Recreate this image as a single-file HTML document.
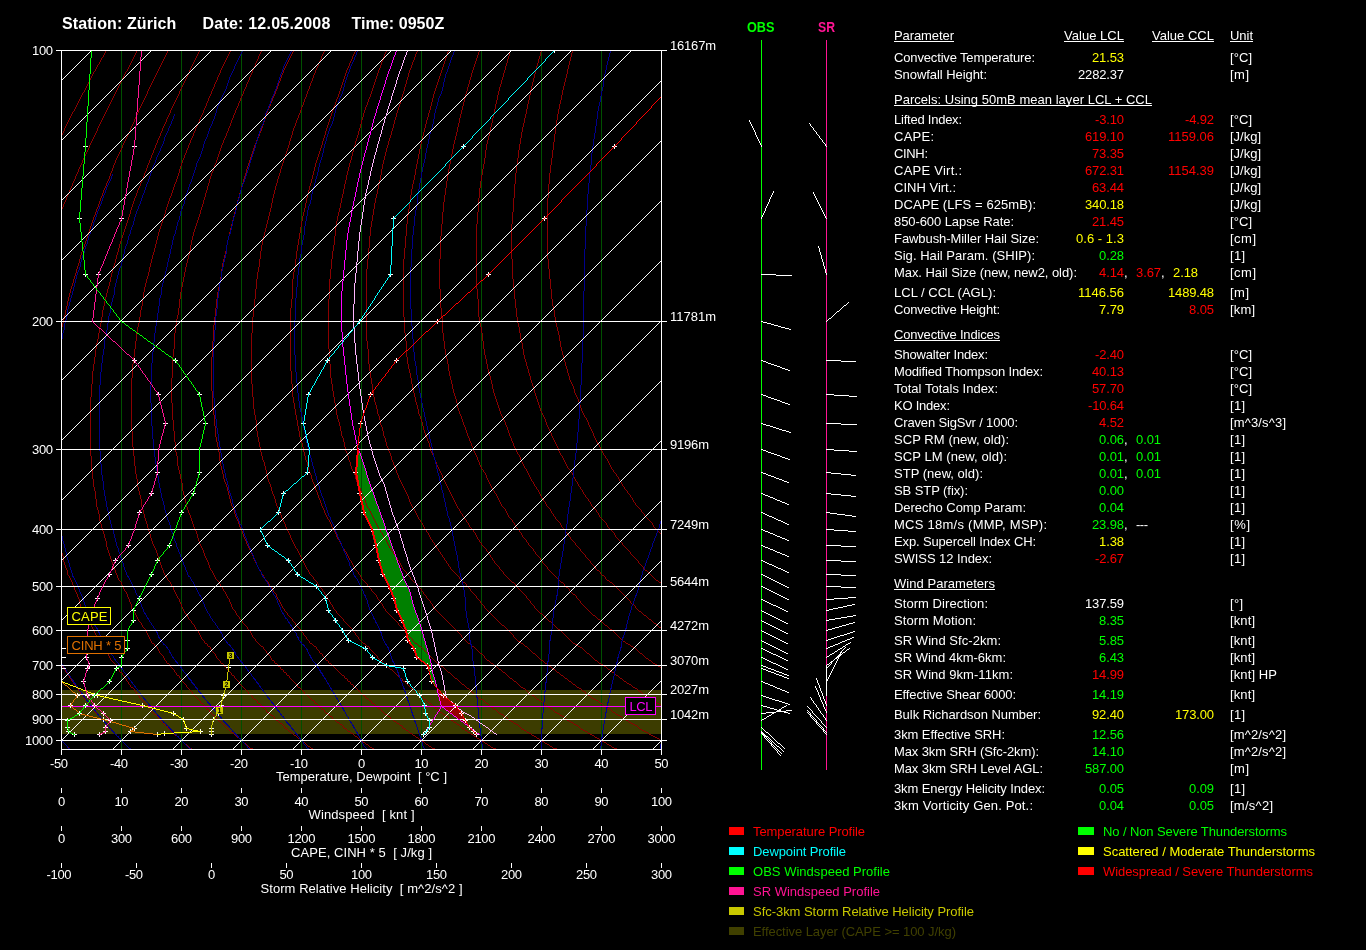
<!DOCTYPE html>
<html><head><meta charset="utf-8"><title>Sounding Zürich 12.05.2008 0950Z</title>
<style>html,body{margin:0;padding:0;background:#000;overflow:hidden}body{width:1366px;height:950px;position:relative}text{white-space:pre}</style></head>
<body>
<svg width="1366" height="950" viewBox="0 0 1366 950" style="position:absolute;left:0;top:0;will-change:transform" shape-rendering="crispEdges" fill="none" font-family="'Liberation Sans', sans-serif" font-size="13">
<rect width="1366" height="950" fill="#000"/>
<defs><clipPath id="cp"><rect x="62" y="51" width="599" height="698"/></clipPath></defs>
<rect x="62" y="690" width="599" height="44" fill="#3c3c00"/>
<polygon points="357.3,447 357,449.3 355.5,472.4 359.2,493.4 363.1,512.5 371,529.5 375,545.6 378.4,560.5 382.4,574.5 388.6,586.3 393.2,598.4 396.4,610.6 401.6,620.9 405.1,630.3 407.6,640.5 413.4,648.3 416.4,657.5 427.5,665.6 428.5,668 431.3,681.4 437,688 437,688 435.4,681.7 432.3,672 430.1,660.3 420.4,625.2 413.2,605.3 409,590 405.3,582.4 397.4,561.3 389.5,538.5 380.7,513.8 370.1,485.7 361.3,457.6 357.8,447" fill="#008000"/>
<polygon points="437,688 443.3,695.4 455,705.6 461.5,713.4 465.6,720.2 469.3,727.6 473.4,731 476.3,734.3 479.6,734.3 441.6,706.9 438.9,695.2 437,688" fill="#960000"/>
<path d="M121.5 51V749M181.5 51V749M241.5 51V749M301.5 51V749M361.5 51V749M421.5 51V749M481.5 51V749M541.5 51V749M601.5 51V749" stroke="#005000"/>
<path transform="translate(.5,0)" d="M0 0m62 133v2m0 72v2m0 114v4m0 226v3m1 -425v2m0 71v3m0 112v4m0 233v6m0 105v2m1 -541v3m0 71v2m0 111v4m0 243v3m1 -439v2m0 72v2m0 108v5m0 250v3m0 102v2m1 -548v2m0 71v3m0 106v4m0 258v2m1 -448v2m0 71v2m0 104v5m0 264v5m0 98v2m1 -555v2m0 71v2m0 102v4m1 -183v2m0 70v3m0 100v4m0 279v2m0 98v2m1 -562v2m0 70v2m0 99v4m0 285v2m1 -466v2m0 70v2m0 98v3m0 291v2m0 97v2m1 -569v2m0 69v3m0 97v3m0 296v3m1 -404v2m0 96v4m0 302v2m0 95v2m1 -575v2m0 68v2m0 95v3m0 308v3m1 -483v2m0 67v3m0 94v3m0 314v2m0 93v2m1 -582v2m0 67v2m0 93v4m0 319v2m1 -491v2m0 67v2m0 92v3m0 325v3m1 -496v2m0 66v3m0 91v3m0 331v2m0 90v2m1 -592v2m0 66v2m0 90v4m0 336v5m1 -507v2m0 66v2m0 88v4m0 345v3m0 85v2m1 -599v2m0 66v2m0 87v3m0 352v2m1 -516v2m0 65v3m0 86v3m0 357v2m1 -453v2m0 87v2m0 362v2m0 83v2m1 -608v2m0 64v2m0 86v3m0 366v2m1 -527v2m0 64v2m0 85v3m0 371v2m1 -531v2m0 64v2m0 84v3m0 376v2m1 -535v2m0 64v2m0 83v3m0 381v2m0 80v2m1 -621v2m0 64v2m0 82v3m0 386v2m1 -543v2m0 63v3m0 81v3m1 -154v2m0 63v2m0 81v3m0 168v59m0 249v2m1 -631v2m0 63v2m0 80v3m0 158v13m0 59v14m0 155v2m1 -553v2m0 63v2m0 79v3m0 148v13m0 86v9m0 148v2m1 -557v2m0 63v2m0 78v3m0 144v7m0 108v8m0 142v2m1 -496v2m0 78v2m0 140v7m0 123v4m0 140v2m0 77v2m1 -643v2m0 62v2m0 77v3m0 134v8m0 134v8m0 134v2m1 -568v2m0 62v2m0 76v3m0 131v6m0 150v8m0 128v2m1 -572v2m0 61v3m0 76v2m0 130v4m0 164v3m0 127v2m1 -513v2m0 76v3m0 126v6m0 171v4m0 125v2m1 -579v2m0 60v2m0 75v3m0 123v6m0 181v7m0 120v2m1 -583v2m0 60v2m0 74v3m0 122v4m0 194v3m0 193v2m1 -661v2m0 60v2m0 74v2m0 119v6m0 201v4m1 -410v2m0 73v3m0 114v7m0 211v3m1 -476v2m0 59v2m0 72v3m0 113v4m0 221v3m1 -481v2m0 59v2m0 72v2m0 111v5m0 228v4m0 109v2m1 -598v2m0 59v2m0 72v2m0 109v4m0 237v3m0 108v2m1 -541v2m0 71v3m0 107v4m0 244v6m0 104v2m1 -545v2m0 71v2m0 106v4m0 254v3m1 -444v2m0 71v2m0 105v3m0 261v3m0 101v2m0 70v2m1 -624v2m0 70v3m0 103v4m0 267v3m0 100v2m1 -556v2m0 69v3m0 101v5m0 274v3m0 99v2m1 -560v2m0 69v2m0 100v4m0 282v3m1 -464v2m0 68v3m0 98v4m0 289v3m1 -469v2m0 67v3m0 98v3m0 296v3m1 -474v2m0 67v2m0 98v3m0 302v2m1 -478v2m0 66v3m0 96v4m0 307v3m0 91v2m1 -576v2m0 66v2m0 95v4m0 314v2m1 -487v2m0 66v2m0 94v3m0 320v3m0 89v2m1 -583v2m0 66v2m0 92v4m0 326v2m1 -496v2m0 66v2m0 90v4m0 422v2m1 -590v2m0 66v2m0 89v3m1 -164v2m0 66v2m0 88v3m0 341v3m1 -507v2m0 65v3m0 87v3m0 347v2m0 86v2m1 -599v2m0 65v2m0 87v3m0 352v2m1 -515v2m0 65v2m0 86v3m0 357v2m0 85v2m1 -606v2m0 65v2m0 85v3m1 -92v2m0 84v3m0 366v2m0 85v2m1 -612v2m0 64v2m0 83v3m0 371v3m1 -530v2m0 64v2m0 82v3m0 377v2m0 83v2m1 -619v2m0 64v2m0 81v3m0 382v3m1 -539v2m0 63v3m0 79v4m0 388v2m0 81v2m1 -626v2m0 63v2m0 79v3m0 168v53m0 173v5m1 -550v2m0 63v2m0 78v3m0 157v14m0 53v16m1 -390v2m0 63v2m0 77v3m0 153v7m0 83v9m1 -401v2m0 62v3m0 76v3m0 148v8m0 99v10m0 145v2m0 76v2m1 -638v2m0 62v2m0 77v2m0 143v8m0 117v8m0 139v2m1 -564v2m0 62v2m0 76v3m0 137v8m0 133v5m0 136v2m0 75v2m1 -581v2m0 75v3m0 134v6m0 146v8m0 130v2m1 -509v3m0 75v2m0 133v4m0 160v4m0 128v2m1 -513v2m0 76v2m0 129v6m0 168v4m0 201v2m1 -592v2m0 75v3m0 124v7m0 178v4m1 -395v2m0 75v2m0 123v4m0 189v8m0 116v2m1 -523v2m0 75v2m0 118v7m0 201v3m0 115v2m1 -527v2m0 74v3m0 113v7m0 211v4m1 -416v2m0 73v3m0 111v5m0 222v4m1 -422v2m0 73v2m0 110v4m0 231v3m0 108v2m1 -537v2m0 72v3m0 108v4m0 238v3m0 107v2m1 -542v3m0 71v3m0 108v3m0 245v4m0 105v2m0 70v2m1 -618v2m0 72v2m0 107v4m0 252v3m0 104v2m1 -550v2m0 71v3m0 104v5m0 259v3m0 103v2m1 -554v2m0 71v2m0 103v4m0 267v4m0 101v2m1 -558v2m0 70v3m0 101v4m0 275v3m0 100v2m0 67v2m1 -631v2m0 70v2m0 100v4m0 282v3m1 -465v2m0 69v3m0 99v3m0 289v2m1 -469v2m0 69v2m0 98v4m0 294v2m0 96v2m1 -571v2m0 68v3m0 96v4m0 300v2m1 -477v2m0 68v2m0 95v4m0 306v3m1 -482v2m0 67v3m0 93v4m0 313v3m0 91v2m1 -580v2m0 67v2m0 92v4m0 320v3m0 90v2m0 66v2m1 -652v2m0 67v2m0 91v3m0 327v3m0 89v2m1 -588v2m0 66v3m0 90v3m0 333v3m1 -502v2m0 66v2m0 90v3m0 339v3m1 -507v2m0 65v3m0 89v3m0 345v2m1 -511v2m0 65v2m0 89v3m0 350v3m0 83v2m1 -601v2m0 65v2m0 88v3m0 356v2m0 83v2m1 -605v2m0 65v2m0 86v4m1 -161v2m0 64v3m0 85v3m0 366v2m0 83v2m1 -612v2m0 64v2m0 85v3m0 371v2m0 146v2m1 -613v2m0 84v3m1 -91v2m0 83v3m0 463v2m1 -556v3m0 83v2m0 384v2m1 -476v2m0 83v3m0 182v25m0 181v2m1 -480v2m0 82v3m0 164v21m0 25v17m1 -316v2m0 81v3m0 159v8m0 63v11m0 156v3m1 -488v2m0 80v3m0 146v16m0 82v11m0 148v2m0 78v2m1 -572v2m0 80v2m0 141v8m0 109v10m0 140v2m1 -496v2m0 79v3m0 137v6m0 127v4m0 138v2m0 77v2m1 -579v2m0 78v3m0 136v4m0 137v10m0 130v2m1 -504v2m0 77v3m0 132v7m0 151v4m1 -379v3m0 75v4m0 126v9m0 162v4m0 125v3m0 74v2m1 -589v2m0 75v3m0 123v7m0 175v5m0 123v2m1 -517v2m0 74v3m0 121v5m0 187v4m0 121v3m0 72v2m1 -596v2m0 73v3m0 119v5m0 196v8m0 116v2m1 -526v2m0 73v2m0 117v5m0 209v4m0 114v2m1 -530v2m0 72v3m0 114v5m0 218v4m0 112v2m1 -534v2m0 72v2m0 112v5m0 227v4m1 -426v2m0 71v3m0 110v4m0 236v4m0 178v2m1 -612v2m0 71v2m0 109v4m0 244v3m0 105v2m1 -544v2m0 70v3m0 107v4m0 251v3m0 104v2m1 -549v3m0 70v2m0 106v4m0 258v2m1 -447v2m0 70v3m0 102v6m0 264v3m1 -452v2m0 70v2m0 100v5m0 273v3m0 100v2m1 -559v2m0 70v2m0 98v4m0 281v3m0 168v2m1 -632v2m0 69v3m0 96v4m0 288v3m1 -467v2m0 69v2m0 96v3m0 295v2m0 96v2m1 -569v2m0 68v3m0 95v3m0 300v2m0 96v2m1 -573v2m0 68v2m0 95v3m0 305v3m1 -480v2m0 68v2m0 94v3m0 311v4m1 -486v2m0 68v2m0 93v3m0 318v3m0 90v2m1 -514v3m0 92v3m0 324v3m0 89v2m1 -518v2m0 91v4m0 330v2m0 89v2m0 64v2m1 -588v2m0 90v3m0 336v2m0 89v2m1 -526v2m0 89v3m0 341v2m1 -440v3m0 87v4m0 346v3m1 -445v2m0 87v3m0 353v3m0 85v2m0 62v2m1 -601v2m0 85v4m0 359v2m1 -455v3m0 84v3m0 365v2m1 -459v2m0 83v4m0 370v2m0 82v2m1 -548v3m0 82v3m0 376v3m1 -469v2m0 81v4m0 382v3m0 142v2m1 -618v2m0 80v3m0 389v2m0 77v2m1 -558v3m0 79v3m0 181v34m0 258v2m1 -562v2m0 80v2m0 168v16m0 34v18m0 162v2m1 -486v2m0 79v3m0 154v16m0 68v6m0 158v2m1 -491v3m0 78v3m0 149v8m0 90v11m0 149v2m1 -495v2m0 79v2m0 143v9m0 109v11m0 140v2m0 75v2m1 -576v2m0 78v3m0 136v9m0 129v5m0 214v2m0 59v2m1 -642v3m0 77v3m0 132v7m0 143v5m1 -372v2m0 77v3m0 130v5m0 155v5m1 -379v2m0 76v3m0 128v5m0 165v9m0 121v2m1 -514v3m0 75v3m0 126v5m0 179v5m0 118v2m0 75v2m1 -595v2m0 75v3m0 121v8m0 189v4m1 -404v2m0 75v2m0 118v6m0 201v4m0 113v2m1 -525v2m0 74v3m0 116v4m0 211v5m0 110v2m0 73v2m1 -604v2m0 74v2m0 115v4m0 220v3m1 -422v2m0 74v2m0 113v4m0 227v2m0 108v2m1 -536v2m0 73v3m0 109v6m0 233v3m0 107v2m0 71v2m1 -613v2m0 73v2m0 107v5m0 242v4m0 105v2m1 -544v2m0 72v3m0 105v4m0 251v4m1 -443v2m0 72v2m0 104v4m0 259v4m0 100v3m1 -479v3m0 102v4m0 267v4m0 99v2m1 -484v3m0 101v4m0 275v3m0 98v3m0 66v2m1 -557v2m0 100v4m0 282v2m0 99v2m1 -494v3m0 98v4m0 288v2m1 -397v2m0 97v4m0 294v4m0 162v2m1 -568v3m0 95v4m0 302v3m0 94v2m1 -505v2m0 94v4m0 309v2m0 94v2m1 -509v2m0 92v4m0 315v2m1 -418v3m0 91v3m0 321v3m1 -423v2m0 90v4m0 327v3m0 90v2m0 63v2m1 -586v3m0 89v3m0 334v2m1 -433v2m0 88v4m0 339v2m1 -437v2m0 87v3m0 345v3m0 87v2m1 -532v3m0 85v4m0 351v3m1 -448v2m0 85v3m0 358v2m1 -452v2m0 84v3m0 363v2m1 -457v3m0 82v4m0 368v3m1 -462v2m0 82v3m0 375v2m0 81v2m1 -549v2m0 81v3m0 380v2m0 144v2m1 -617v3m0 80v3m0 385v2m1 -475v2m0 80v3m0 390v2m0 79v2m1 -560v2m0 79v3m0 176v51m0 168v2m0 79v2m1 -565v3m0 78v3m0 163v16m0 51v13m0 157v2m0 79v2m0 59v2m1 -630v2m0 78v3m0 157v9m0 80v12m0 147v3m1 -493v2m0 77v3m0 151v9m0 101v6m0 144v2m1 -498v3m0 77v2m0 144v10m0 116v5m0 141v2m0 76v2m1 -580v2m0 77v3m0 136v10m0 131v11m0 132v2m1 -506v2m0 77v2m0 132v7m0 152v6m0 128v2m0 134v2m1 -647v3m0 77v2m0 129v5m0 165v5m0 125v2m1 -515v2m0 77v3m0 123v8m0 175v5m1 -395v2m0 77v2m0 118v8m0 188v5m0 118v2m1 -444v3m0 114v6m0 201v4m0 116v2m0 131v2m1 -582v3m0 112v5m0 211v4m1 -338v3m0 111v4m0 220v2m0 113v2m0 70v2m1 -530v3m0 110v4m0 226v4m0 111v2m1 -463v3m0 109v4m0 234v4m1 -357v3m0 108v4m0 242v4m0 177v2m0 57v2m1 -602v3m0 107v4m0 250v5m1 -371v2m0 106v4m0 259v3m0 100v2m1 -478v2m0 104v4m0 266v2m0 100v2m1 -483v3m0 102v4m0 272v3m0 169v2m1 -557v2m0 100v5m0 279v4m0 167v2m1 -562v3m0 97v5m0 288v3m0 94v2m1 -494v2m0 96v4m0 296v2m0 94v2m1 -498v2m0 94v4m0 302v3m0 162v2m0 54v2m1 -628v3m0 92v4m0 309v4m1 -414v2m0 92v3m0 317v3m0 88v3m1 -511v3m0 90v4m0 323v2m0 89v2m0 65v2m1 -583v3m0 90v3m0 329v2m1 -429v2m0 90v3m0 334v3m0 87v2m1 -524v3m0 88v4m0 340v2m0 87v2m0 63v2m1 -594v3m0 88v3m0 346v3m0 86v2m1 -533v2m0 88v3m0 352v2m0 86v2m1 -538v3m0 87v3m0 357v2m0 148v2m1 -604v2m0 87v3m0 362v2m0 85v2m0 115v2m1 -662v2m0 86v3m0 367v3m1 -463v2m0 85v3m0 373v2m0 144v2m1 -613v2m0 84v3m0 378v2m0 82v2m1 -555v2m0 83v3m0 383v2m1 -475v2m0 81v4m0 388v2m0 141v2m1 -622v2m0 80v3m0 167v63m0 164v3m1 -484v2m0 79v3m0 161v9m0 63v13m0 154v2m1 -488v2m0 77v4m0 144v20m0 85v13m0 143v2m0 77v2m1 -493v3m0 141v7m0 118v6m0 139v2m1 -418v2m0 139v5m0 131v6m0 135v2m1 -423v3m0 133v8m0 142v6m0 131v2m0 75v2m1 -505v3m0 128v8m0 156v5m1 -302v2m0 125v6m0 169v6m0 123v2m0 134v2m1 -572v3m0 121v6m0 181v5m0 120v2m1 -440v2m0 118v6m0 192v6m0 116v2m1 -445v3m0 114v6m0 204v4m0 114v2m0 72v2m1 -524v3m0 111v6m0 214v2m0 114v2m1 -454v2m0 109v5m0 222v4m0 112v2m1 -459v3m0 107v4m0 231v5m0 109v2m0 70v2m1 -536v3m0 106v4m0 240v4m0 107v2m0 127v2m1 -597v2m0 104v5m0 248v4m0 105v2m1 -473v3m0 101v5m0 257v2m0 105v2m0 68v2m1 -548v3m0 100v4m0 264v4m1 -377v2m0 99v4m0 272v4m0 100v2m1 -486v3m0 97v4m0 280v3m0 99v2m0 67v2m1 -560v3m0 97v3m0 287v2m1 -394v2m0 96v4m0 292v4m1 -401v3m0 94v4m0 300v3m1 -407v3m0 93v4m0 307v2m0 93v2m1 -506v2m0 92v4m0 313v3m0 214v2m1 -633v3m0 90v4m0 320v3m1 -422v2m0 90v3m0 327v2m0 155v2m1 -583v2m0 89v3m0 332v3m0 87v2m1 -521v3m0 88v3m0 338v3m0 86v2m0 119v2m1 -646v2m0 88v3m0 344v2m0 151v2m1 -594v2m0 87v3m0 349v3m1 -447v3m0 86v3m0 355v3m1 -452v2m0 85v4m0 361v2m0 81v2m0 63v2m1 -604v2m0 84v3m0 367v2m1 -375v3m0 372v3m0 79v2m0 116v2m1 -581v4m0 378v2m0 143v2m1 -532v3m0 384v2m0 78v2m1 -472v3m0 389v2m0 78v2m1 -477v3m0 174v50m0 312v2m1 -544v3m0 157v20m0 50v15m0 156v2m0 78v2m1 -486v3m0 150v10m0 85v14m0 144v2m0 78v2m1 -491v3m0 143v10m0 109v6m0 140v3m1 -417v3m0 138v8m0 125v7m0 136v2m0 76v2m0 110v2m1 -612v3m0 135v6m0 140v6m0 210v2m1 -504v2m0 129v9m0 152v6m0 127v2m1 -430v3m0 122v9m0 167v6m0 123v2m1 -435v3m0 119v6m0 182v6m0 119v3m0 74v2m1 -516v2m0 117v5m0 194v4m0 118v2m1 -445v3m0 115v4m0 203v3m1 -331v3m0 114v4m0 210v4m0 114v2m1 -454v3m0 112v5m0 218v5m0 111v2m1 -459v3m0 110v5m0 228v5m0 108v2m1 -464v3m0 109v4m0 238v2m0 108v2m1 -469v3m0 107v5m0 244v4m0 177v2m0 105v2m1 -652v3m0 105v5m0 253v5m0 102v2m0 125v2m1 -605v3m0 104v4m0 263v4m1 -381v3m0 102v5m0 271v2m0 99v2m1 -486v2m0 101v4m0 278v3m0 98v2m0 123v2m1 -615v2m0 99v4m0 285v4m0 96v2m1 -495v3m0 97v4m0 293v2m0 96v2m1 -499v2m0 97v3m0 299v4m0 216v2m1 -625v2m0 95v4m0 306v3m0 92v2m1 -507v3m0 93v4m0 313v2m0 92v2m0 64v2m1 -577v2m0 92v4m0 319v2m0 92v2m0 118v2m1 -635v2m0 91v3m0 325v2m0 92v2m1 -428v4m0 330v4m0 154v2m1 -497v3m0 338v3m1 -347v3m0 344v2m1 -353v4m0 349v2m0 86v2m0 63v2m1 -511v3m0 355v2m1 -364v4m0 360v3m0 84v2m1 -457v4m0 367v3m0 83v2m1 -462v3m0 374v2m1 -383v4m0 379v2m1 -388v3m0 385v2m1 -393v3m0 390v3m0 193v2m1 -593v2m0 162v72m0 162v3m1 -404v3m0 154v10m0 72v8m0 157v2m0 76v2m1 -487v3m0 146v11m0 90v15m1 -267v2m0 137v12m0 116v7m0 138v2m0 136v2m1 -555v3m0 130v9m0 135v7m0 133v2m1 -422v3m0 127v6m0 151v6m0 129v2m0 74v2m0 110v2m1 -615v3m0 124v6m0 163v7m0 124v2m1 -432v3m0 121v6m0 176v6m0 120v2m1 -437v3m0 118v6m0 188v5m0 117v2m1 -442v3m0 116v5m0 199v3m0 116v2m1 -447v3m0 115v4m0 207v4m0 114v2m0 70v2m1 -524v3m0 113v5m0 215v5m0 111v2m0 70v2m0 57v2m1 -588v3m0 111v5m0 225v2m0 111v2m1 -461v2m0 110v4m0 232v4m1 -355v3m0 107v5m0 240v5m0 105v2m0 69v2m1 -541v3m0 104v6m0 250v2m1 -367v2m0 102v5m0 258v4m0 102v2m0 69v2m0 55v2m1 -606v3m0 100v4m0 267v5m0 99v2m0 69v2m1 -554v3m0 99v4m0 276v2m0 99v2m1 -487v2m0 98v4m0 282v4m0 167v2m1 -463v4m0 290v4m0 94v2m1 -397v3m0 298v2m0 94v2m1 -403v4m0 303v3m0 93v2m1 -408v3m0 310v2m0 93v2m1 -413v3m0 315v3m0 261v2m1 -588v4m0 321v4m0 89v2m1 -423v3m0 329v2m1 -338v4m0 334v3m0 87v2m1 -434v4m0 341v2m1 -350v3m0 347v3m0 85v2m1 -444v4m0 353v3m1 -363v3m0 360v2m0 83v2m1 -453v3m0 365v3m0 145v2m1 -521v3m0 371v2m0 81v2m1 -463v4m0 376v2m0 81v2m1 -468v3m0 382v2m0 81v2m1 -473v3m0 387v2m0 81v2m0 110v2m0 45v2m1 -637v3m0 165v58m0 169v2m1 -401v4m0 157v11m0 58v16m0 155v2m1 -406v3m0 149v12m0 85v8m0 149v2m1 -412v4m0 140v12m0 105v16m0 135v2m0 78v2m1 -497v3m0 135v9m0 133v7m0 130v2m0 137v2m1 -562v4m0 132v6m0 149v5m0 127v3m1 -429v3m0 129v7m0 160v4m0 126v3m1 -434v2m0 125v7m0 171v5m0 124v2m0 73v2m1 -514v3m0 121v6m0 183v6m0 120v2m1 -444v3m0 119v5m0 195v5m0 117v2m0 131v2m1 -581v2m0 118v4m0 205v4m1 -336v3m0 115v5m0 213v4m0 112v2m1 -457v3m0 112v6m0 222v5m0 109v2m1 -461v2m0 110v5m0 233v3m0 108v2m1 -356v5m0 241v4m0 106v2m0 67v2m1 -432v5m0 250v5m0 103v2m1 -370v5m0 260v2m1 -272v5m0 267v3m0 101v2m1 -382v4m0 275v3m0 167v2m1 -455v4m0 282v4m0 97v2m1 -393v4m0 290v4m0 95v2m0 65v2m1 -466v4m0 298v3m0 94v2m1 -405v4m0 305v3m1 -316v4m0 312v2m0 92v2m0 64v2m1 -481v3m0 318v3m1 -328v4m0 324v2m0 90v2m1 -425v3m0 330v4m0 88v2m1 -431v4m0 337v4m0 86v2m0 62v2m1 -501v4m0 345v2m1 -355v4m0 351v2m0 85v2m0 62v2m1 -512v4m0 357v2m0 149v2m1 -517v3m0 363v3m0 83v2m1 -457v3m0 369v2m1 -377v3m0 374v3m0 81v2m1 -466v3m0 380v2m1 -388v3m0 385v2m0 80v2m1 -475v3m0 180v30m0 180v2m1 -398v3m0 160v23m0 30v19m0 163v2m0 79v2m1 -484v3m0 151v12m0 72v9m0 156v2m1 -408v3m0 142v12m0 93v16m0 142v3m0 77v2m1 -493v3m0 135v10m0 121v8m0 137v2m1 -419v3m0 131v7m0 139v8m0 131v2m0 76v2m1 -502v3m0 127v7m0 154v6m0 127v2m1 -429v3m0 123v7m0 167v4m0 125v2m0 75v2m1 -511v3m0 120v6m0 178v5m0 122v2m1 -319v6m0 189v7m0 117v2m0 74v2m0 151v2m1 -555v5m0 202v5m0 114v2m1 -333v5m0 212v4m0 112v2m0 73v2m1 -415v5m0 221v4m0 110v2m1 -347v5m0 230v5m0 107v2m1 -354v5m0 240v4m0 105v2m1 -360v4m0 249v3m0 104v2m1 -366v4m0 256v3m0 103v2m1 -372v4m0 263v4m0 101v2m1 -379v5m0 271v5m0 98v2m1 -385v4m0 281v3m1 -293v5m0 288v3m0 95v2m0 66v2m1 -465v4m0 296v2m0 95v2m1 -403v4m0 302v3m0 216v2m1 -531v4m0 309v3m0 92v2m1 -414v4m0 316v3m1 -327v4m0 323v2m0 90v2m1 -425v4m0 329v3m1 -339v3m0 336v3m0 87v2m0 62v2m1 -499v4m0 342v3m1 -352v3m0 349v2m0 85v2m1 -445v4m0 354v3m0 84v2m1 -450v3m0 361v2m0 146v2m1 -518v4m0 366v3m1 -376v3m0 373v2m1 -381v3m0 378v3m0 79v2m1 -468v3m0 384v2m1 -392v3m0 389v2m0 78v2m1 -477v3m0 163v65m0 166v2m0 78v2m0 59v2m1 -543v3m0 154v12m0 65v10m0 158v3m0 77v2m1 -487v3m0 143v14m0 87v18m0 143v2m1 -274v10m0 119v6m0 139v3m0 75v2m1 -361v7m0 135v4m0 138v2m0 134v2m1 -428v6m0 146v6m0 134v2m0 74v2m1 -376v6m0 158v8m1 -177v5m0 172v8m0 121v2m1 -314v6m0 185v6m0 251v2m0 48v2m1 -508v8m0 197v4m0 114v2m1 -331v6m0 209v5m0 111v3m0 71v2m1 -411v4m0 220v5m0 109v2m1 -344v4m0 229v4m0 107v2m0 70v2m1 -422v4m0 237v3m0 106v2m1 -357v5m0 244v4m0 104v2m0 69v2m1 -434v4m0 253v4m0 102v2m1 -370v5m0 261v5m0 99v2m0 68v2m1 -446v4m0 271v4m1 -284v5m0 279v3m0 95v2m0 68v2m1 -459v5m0 287v3m1 -299v4m0 295v3m0 92v2m1 -401v5m0 302v3m0 91v2m1 -407v4m0 310v3m0 90v2m1 -413v4m0 317v3m0 89v2m0 65v2m1 -485v3m0 324v3m0 88v2m1 -424v4m0 330v2m0 88v2m1 -429v3m0 336v2m1 -345v4m0 341v2m0 152v2m1 -504v3m0 347v2m1 -356v4m0 352v3m0 84v2m1 -448v3m0 359v2m0 84v2m1 -454v4m0 364v3m0 83v2m1 -459v3m0 371v3m0 82v2m1 -465v4m0 377v3m1 0v2m1 -214v35m0 179v3m1 -229v12m0 35v20m0 162v2m0 77v2m1 -324v14m0 67v10m0 154v3m0 189v2m1 -453v14m0 91v10m0 147v2m0 75v2m1 -352v11m0 115v9m0 140v2m0 75v2m0 57v2m1 -421v8m0 135v9m0 133v2m1 -294v7m0 152v6m0 129v2m1 -304v8m0 165v4m1 -183v6m0 177v6m0 122v2m0 73v2m1 -394v6m0 189v6m0 118v3m1 -328v6m0 201v4m0 117v2m0 71v2m1 -408v5m0 211v6m0 113v2m0 71v2m1 -414v4m0 222v6m0 109v2m1 -348v5m0 232v4m0 107v2m1 -354v4m0 241v3m1 -253v5m0 248v4m0 103v2m0 69v2m0 54v2m1 -494v5m0 257v3m0 102v2m1 -373v4m0 265v4m0 100v2m0 68v2m1 -450v5m0 273v3m0 99v2m1 -387v5m0 281v4m0 97v2m0 122v2m1 -517v4m0 290v3m0 96v2m1 -399v4m0 297v3m1 -308v4m0 304v3m0 93v2m0 65v2m1 -477v4m0 311v4m0 91v2m0 120v2m1 -538v4m0 319v3m0 156v2m1 -488v4m0 326v3m0 88v2m1 -426v3m0 333v3m1 -343v4m0 339v3m0 85v2m1 -436v3m0 346v3m0 84v2m1 -442v4m0 352v3m0 83v2m0 62v2m1 -149v2m0 83v2m1 -85v2m0 146v2m1 -148v2m0 82v2m1 -84v2m1 0v3m0 80v2m1 -82v3m0 79v2m1 -308v61m0 166v2m0 140v2m1 -385v14m0 61v10m0 158v2m1 -256v11m0 85v10m0 150v2m1 -266v8m0 106v10m0 142v2m0 76v2m1 -353v7m0 124v10m0 134v3m0 75v2m1 -363v8m0 141v7m0 130v2m1 -296v8m0 156v4m0 128v2m0 74v2m1 -382v8m0 168v7m0 123v2m1 -316v8m0 183v6m0 119v2m0 73v2m1 -399v6m0 197v4m0 117v2m1 -332v6m0 207v4m0 115v2m1 -339v5m0 217v4m0 113v3m1 -347v5m0 226v6m0 110v2m1 -353v4m0 237v6m0 106v2m0 68v2m1 -430v5m0 247v4m0 174v2m1 -437v5m0 256v4m0 101v2m1 -372v4m0 265v4m0 99v2m1 -378v4m0 273v3m0 98v2m0 122v2m1 -508v4m0 280v4m0 96v2m0 66v2m1 -458v4m0 288v3m0 95v2m1 -397v5m0 295v4m0 93v2m1 -403v4m0 304v3m0 158v2m1 -475v4m0 311v4m0 209v2m1 -534v4m0 319v2m0 88v2m0 65v2m1 -486v4m0 325v2m1 -333v2m0 331v2m0 87v2m1 -89v3m0 86v2m1 -88v4m0 84v2m1 -86v2m0 84v2m0 62v2m1 -150v2m0 199v2m1 -201v2m0 83v2m1 -85v3m0 82v2m1 -84v3m1 0v3m0 79v2m0 60v2m0 50v2m1 -195v3m1 0v2m0 77v2m1 -79v2m0 77v2m1 -79v2m1 78v2m0 58v2m0 135v2m1 -276v2m1 0v2m1 0v3m0 74v2m1 -76v2m1 0v2m0 73v2m0 57v2m1 -134v2m0 73v2m1 -75v2m1 0v3m1 0v2m1 0v2m0 127v2m1 -129v2m0 68v2m1 -70v2m1 69v2m1 -70v2m0 68v2m1 -70v2m0 123v2m1 -125v2m1 0v2m1 0v2m2 1v2m0 119v2m1 -56v2m1 -66v2m0 64v2m1 -66v2m1 0v2m1 0v2m1 0v2m2 1v2m1 61v2m1 0v2m1 -63v2m2 1v2m1 0v2m2 1v2m1 0v2m0 57v2m2 -58v2m3 2v2m3 2v2m0 55v2m0 47v2m2 -105v2m1 0v2m2 1v2m0 101v2m3 -47v2m3 -53v2m2 55v2m1 -55v2m8 7v2m1 0v2" stroke="#8c0000"/><path transform="translate(0,.5)" d="M0 0m199 51h1m30 0h1m30 0h1m31 0h1m30 0h1m30 0h1m30 0h1m30 0h1m30 0h1m30 0h1m30 0h1m30 0h1m-440 6h1m-5 7h1m-5 7h1m31 0h1m-44 21h1m-11 19h1m511 306h1m12 27h1m-81 10h1m42 1h1m42 0h1m1 3h1m-82 10h1m42 0h1m-87 1h1m86 0h1m42 0h1m-129 3h1m86 0h1m42 0h1m0 1h1m1 3h1m-86 5h1m43 0h1m43 0h1m-86 5h1m43 0h1m43 0h1m-87 3h1m43 0h1m43 0h1m-133 1h1m132 0h1m-132 3h1m132 0h1m-45 1h1m44 0h1m-44 3h1m44 0h1m-90 1h1m44 0h1m-44 3h1m44 0h1m44 1h1m1 3h1m-135 1h1m44 0h1m44 0h1m44 0h1m-135 1h1m44 0h1m44 0h1m44 0h1m-271 1h1m44 0h1m44 0h1m45 0h1m44 0h1m44 0h1m44 0h1m-45 1h1m44 0h1m-44 3h1m44 0h1m-182 1h1m90 0h1m90 0h1m-181 3h1m90 0h1m90 0h1m-137 1h1m90 0h1m45 0h1m-137 1h1m90 0h1m45 0h1m-320 1h1m90 0h1m45 0h1m45 0h1m44 0h1m45 0h1m45 0h1m-92 1h1m45 0h1m45 0h1m-92 1h1m45 0h1m45 0h1m-230 1h1m45 0h1m45 0h1m45 0h1m45 0h1m45 0h1m-182 5h1m45 0h1m45 0h1m45 0h1m45 0h1m-184 1h1m45 0h1m45 0h1m45 0h1m45 0h1m-323 1h1m45 0h1m45 0h1m46 0h1m45 0h1m45 0h1m45 0h1m45 0h1m-46 1h1m45 0h1m-46 1h1m45 0h1m-278 1h1m45 0h1m46 0h1m45 0h1m45 0h1m46 0h1m45 0h1m-93 1h1m92 0h1m-92 3h1m-47 1h1m92 0h1m-93 1h1m92 0h1m-280 1h1m46 0h1m45 0h1m46 0h1m46 0h1m45 0h1m46 0h1m-47 1h1m46 0h1m-47 1h1m46 0h1m-188 1h1m46 0h1m46 0h1m46 0h1m46 0h1m-187 3h1m46 0h1m46 0h1m46 0h1m46 0h1m-141 1h1m46 0h1m46 0h1m46 0h1m-141 1h1m46 0h1m46 0h1m46 0h1m-330 1h1m46 0h1m46 0h1m46 0h1m47 0h1m46 0h1m46 0h1m46 0h1m0 1h1m0 1h1m-284 1h1m46 0h1m46 0h1m47 0h1m46 0h1m46 0h1m47 0h1m-48 1h1m0 1h1m-190 1h1m46 0h1m47 0h1m46 0h1m47 0h1m46 0h1m-95 1h1m94 0h1m-95 1h1m94 0h1m-238 1h1m46 0h1m47 0h1m47 0h1m46 0h1m47 0h1m-48 1h1m47 0h1m-48 1h1m47 0h1m-287 1h1m47 0h1m46 0h1m47 0h1m47 0h1m47 0h1m47 0h1m-191 3h1m47 0h1m47 0h1m47 0h1m47 0h1m-144 1h1m47 0h1m47 0h1m47 0h1m-144 1h1m47 0h1m47 0h1m47 0h1m-193 1h1m48 0h1m47 0h1m47 0h1m47 0h1m-384 3h1m47 0h1m47 0h1m47 0h1m47 0h1m48 0h1m47 0h1m47 0h1m47 0h1m-434 1h1m144 0h1m47 0h1m47 0h1m48 0h1m47 0h1m47 0h2m46 0h2m-290 1h1m47 0h1m47 0h1m48 0h1m47 0h1m48 0h1m47 0h1m-194 1h1m96 0h1m96 0h1m-194 1h1m96 0h1m96 0h1m-388 1h1m47 0h1m48 0h1m47 0h1m48 0h1m47 0h1m48 0h1m47 0h1m48 0h1m-583 1h1m96 0h1m145 0h1m96 0h1m48 0h1m47 0h1m48 0h1m47 0h2m47 0h1m-340 1h1m96 0h1m48 0h1m47 0h1m48 0h1m48 0h1m47 0h1m-146 1h1m48 0h1m96 0h1m-146 1h1m48 0h1m96 0h1m-439 1h1m48 0h1m48 0h1m47 0h1m48 0h1m48 0h1m48 0h1m48 0h1m47 0h1m48 0h1m-537 1h1m48 0h1m48 0h1m48 0h1m48 0h1m47 0h1m48 0h1m48 0h1m48 0h1m48 0h1m47 0h2m47 0h2m-538 1h1m48 0h1m48 0h1m48 0h1m48 0h1m47 0h1m48 0h1m48 0h1m48 0h1m48 0h1m48 0h1m48 0h1m-294 1h1m48 0h2m47 0h2m47 0h2m47 0h2m47 0h2m47 0h2m-295 1h1m49 0h1m48 0h1m48 0h1m48 0h1m48 0h1m0 1h1m0 1h1m-443 1h1m48 0h1m48 0h1m48 0h1m48 0h1m49 0h1m48 0h1m48 0h1m48 0h1m49 0h1m-345 1h1m48 0h1m48 0h1m49 0h1m48 0h1m48 0h1m48 0h2m48 0h1m-296 1h1m48 0h1m49 0h1m48 0h1m48 0h1m49 0h1m48 0h1m-99 1h1m98 0h1m-99 1h1m98 0h1m-495 1h1m98 0h1m98 0h1m48 0h1m49 0h1m48 0h1m49 0h1m48 0h1m49 0h1m-347 1h1m98 0h1m98 0h1m49 0h1m48 0h1m49 0h1m-347 1h1m98 0h1m98 0h1m49 0h1m48 0h1m49 0h1m-298 1h1m49 0h1m48 0h1m49 0h1m49 0h1m48 0h2m48 0h1m-199 1h1m49 0h1m49 0h1m49 0h1m48 0h1m0 1h1m0 1h1m-449 1h1m49 0h1m198 0h1m49 0h1m49 0h1m49 0h1m49 0h1m-350 1h1m49 0h1m49 0h1m49 0h1m49 0h1m49 0h1m49 0h1m49 0h1m-250 1h1m49 0h1m49 0h1m49 0h1m49 0h1m49 0h1m-249 3h1m49 0h1m49 0h1m49 0h1m49 0h1m49 0h1m-301 1h1m150 0h1m49 0h1m49 0h1m49 0h2m-151 1h1m49 0h1m49 0h1m50 0h1m-51 1h1m0 1h1m-303 1h1m100 0h1m49 0h1m50 0h1m49 0h1m50 0h1m49 0h1m-505 1h1m100 0h1m100 0h1m100 0h1m50 0h1m49 0h1m50 0h1m49 0h1m-505 1h1m100 0h1m100 0h1m100 0h1m50 0h1m49 0h1m50 0h1m49 0h1m-354 1h1m100 0h1m50 0h1m50 0h1m49 0h1m50 0h1m49 0h2m-355 1h1m100 0h1m50 0h1m50 0h1m49 0h1m50 0h1m50 0h1m-457 1h1m151 0h1m50 0h1m50 0h1m50 0h1m49 0h2m49 0h1m50 0h1m-457 1h1m151 0h1m50 0h1m50 0h1m50 0h1m50 0h1m49 0h1m50 0h1m-407 1h1m50 0h1m50 0h1m50 0h1m50 0h1m50 0h1m50 0h1m49 0h2m49 0h2m-408 1h1m50 0h1m50 0h1m50 0h1m50 0h1m50 0h1m50 0h1m50 0h1m50 0h1m-357 1h1m50 0h1m50 0h1m50 0h1m50 0h1m50 0h1m50 0h1m50 0h1m-357 1h1m50 0h1m50 0h1m50 0h1m50 0h1m50 0h1m50 0h1m50 0h1m-460 1h1m50 0h1m153 0h1m50 0h1m50 0h1m50 0h1m50 0h2m49 0h2m-461 1h1m50 0h1m153 0h1m50 0h1m50 0h1m50 0h1m51 0h1m50 0h1m-513 1h1m153 0h1m50 0h1m51 0h1m50 0h1m50 0h1m50 0h2m50 0h1m50 0h1m-513 1h1m153 0h1m50 0h1m51 0h1m50 0h1m50 0h1m51 0h1m50 0h1m50 0h1m-565 1h1m102 0h1m50 0h1m102 0h1m102 0h1m50 0h1m51 0h1m50 0h1m50 0h2m-566 1h1m102 0h1m50 0h1m102 0h1m102 0h1m50 0h1m51 0h1m50 0h1m51 0h1m-412 1h1m50 0h1m51 0h1m50 0h1m51 0h1m50 0h2m50 0h1m50 0h2m50 0h1m-412 1h1m50 0h1m51 0h1m50 0h1m51 0h1m51 0h1m50 0h1m51 0h1m50 0h1m-516 1h1m154 0h1m51 0h1m50 0h1m51 0h1m51 0h1m50 0h1m51 0h1m50 0h2m-517 1h1m154 0h1m51 0h1m50 0h1m51 0h1m51 0h1m50 0h1m51 0h1m-414 1h1m51 0h1m154 0h1m51 0h1m51 0h1m50 0h2m50 0h2m-415 1h1m51 0h1m154 0h1m51 0h1m51 0h1m51 0h1m51 0h1m-312 1h1m51 0h1m51 0h1m51 0h1m51 0h1m51 0h1m51 0h1m-312 1h1m51 0h1m51 0h1m51 0h1m51 0h1m51 0h1m51 0h1m-156 1h1m51 0h1m51 0h1m51 0h1m-156 1h1m51 0h1m51 0h1m51 0h1m-313 1h1m51 0h1m51 0h1m156 0h1m51 0h1m-313 1h1m51 0h1m51 0h1m156 0h1m51 0h1m-366 1h1m156 0h1m51 0h1m51 0h1m52 0h1m51 0h1m-366 1h1m156 0h1m51 0h1m51 0h1m52 0h1m51 0h1m-419 1h1m104 0h1m51 0h1m104 0h1m51 0h1m52 0h1m51 0h1m-419 1h1m104 0h1m51 0h1m104 0h1m51 0h1m52 0h1m51 0h1m-367 1h1m104 0h1m51 0h1m52 0h1m51 0h2m51 0h1m51 0h2m-368 1h1m104 0h1m51 0h1m52 0h1m52 0h1m51 0h1m52 0h1m-526 1h1m51 0h2m51 0h2m51 0h1m51 0h2m51 0h2m50 0h2m51 0h2m51 0h2m50 0h2m51 0h2m-527 1h1m157 0h1m52 0h1m52 0h1m51 0h1m52 0h1m52 0h1m51 0h2m51 0h2m-528 1h1m157 0h1m52 0h1m52 0h1m51 0h1m52 0h1m52 0h1m52 0h1m52 0h1m-528 1h1m51 0h2m51 0h2m51 0h2m51 0h2m51 0h2m50 0h2m51 0h2m51 0h2m51 0h2m51 0h2m-212 1h1m52 0h1m52 0h1m52 0h2m51 0h2m-213 1h1m52 0h1m52 0h1m53 0h1m52 0h1m-372 1h1m52 0h1m52 0h1m52 0h1m52 0h1m52 0h1m53 0h1m52 0h1m-372 1h1m52 0h1m52 0h1m52 0h1m52 0h1m52 0h1m53 0h1m52 0h1m-426 1h1m159 0h1m52 0h1m52 0h1m52 0h1m53 0h1m52 0h1m-426 1h1m159 0h1m52 0h1m52 0h1m52 0h1m53 0h1m52 0h1m-533 1h1m52 0h1m53 0h1m52 0h1m52 0h2m52 0h1m52 0h1m52 0h2m51 0h2m52 0h2m51 0h2m-481 1h1m106 0h1m106 0h1m52 0h1m53 0h1m52 0h1m53 0h1m52 0h1m-481 1h1m106 0h1m106 0h1m52 0h1m53 0h1m52 0h1m53 0h1m52 0h1m-321 1h1m106 0h1m106 0h1m53 0h1m52 0h1m-321 1h1m106 0h1m106 0h1m53 0h1m52 0h1m-429 1h1m160 0h1m53 0h1m52 0h1m53 0h1m53 0h1m52 0h2m-430 1h1m160 0h1m53 0h1m52 0h1m53 0h1m53 0h1m53 0h1m-538 1h1m53 0h1m53 0h1m52 0h2m52 0h2m52 0h2m52 0h1m52 0h2m52 0h2m52 0h2m52 0h2m-539 1h1m322 0h1m53 0h1m53 0h1m53 0h1m53 0h1m-539 1h1m322 0h1m53 0h1m53 0h1m53 0h1m53 0h1m-539 1h1m52 0h2m52 0h2m52 0h2m52 0h2m52 0h2m52 0h2m52 0h2m52 0h2m52 0h2m52 0h2m-324 1h1m53 0h1m53 0h1m53 0h1m53 0h1m53 0h2m52 0h2m-325 1h1m53 0h1m53 0h1m53 0h1m53 0h1m54 0h1m53 0h1m-596 1h1m53 0h1m53 0h1m53 0h2m52 0h2m53 0h1m53 0h1m53 0h2m52 0h2m52 0h2m53 0h2m52 0h2m-489 1h1m162 0h1m53 0h1m54 0h1m53 0h1m53 0h1m54 0h1m53 0h1m-489 1h1m162 0h1m53 0h1m54 0h1m53 0h1m53 0h1m54 0h1m-544 1h1m53 0h1m54 0h1m53 0h1m53 0h2m53 0h1m53 0h2m53 0h1m53 0h2m52 0h2m53 0h2m-382 1h1m108 0h1m54 0h1m53 0h1m54 0h1m53 0h1m54 0h1m-382 1h1m108 0h1m54 0h1m53 0h1m54 0h1m53 0h1m54 0h1m-546 1h1m53 0h2m53 0h1m54 0h1m53 0h2m53 0h1m54 0h1m53 0h2m53 0h2m52 0h2m53 0h2m-274 1h1m54 0h1m54 0h1m54 0h1m53 0h1m54 0h1m-274 1h1m54 0h1m54 0h1m54 0h1m53 0h1m54 0h1m-548 1h1m54 0h1m53 0h2m53 0h2m53 0h2m53 0h2m53 0h1m54 0h1m54 0h1m53 0h2m53 0h2m-220 1h1m54 0h1m54 0h1m54 0h1m54 0h1m-220 1h1m54 0h1m54 0h1m54 0h1m54 0h1m-550 1h1m54 0h1m54 0h1m54 0h1m54 0h1m54 0h2m53 0h2m53 0h2m53 0h2m53 0h2m53 0h2m-386 1h1m54 0h1m165 0h1m54 0h1m54 0h1m54 0h1m-386 1h1m54 0h1m165 0h1m54 0h1m54 0h1m54 0h1m-552 1h1m54 0h1m54 0h1m55 0h1m54 0h1m54 0h2m53 0h2m54 0h1m54 0h2m53 0h2m53 0h2m-443 1h1m110 0h1m110 0h1m54 0h1m55 0h1m54 0h1m54 0h1m-443 1h1m110 0h1m110 0h1m54 0h1m55 0h1m54 0h1m54 0h2m-555 1h1m54 0h1m55 0h1m54 0h1m55 0h1m54 0h2m54 0h1m54 0h2m54 0h1m54 0h2m54 0h2m-390 1h1m166 0h1m55 0h1m54 0h1m55 0h1m55 0h1m-390 1h1m166 0h1m55 0h1m54 0h1m55 0h1m55 0h1m-557 1h1m54 0h2m54 0h1m55 0h1m54 0h2m54 0h2m54 0h1m55 0h1m54 0h2m54 0h2m54 0h2m-558 1h1m55 0h1m54 0h1m55 0h1m55 0h1m55 0h1m54 0h2m54 0h2m54 0h2m54 0h2m54 0h2m-448 1h1m55 0h1m55 0h1m55 0h1m55 0h1m55 0h1m55 0h1m55 0h1m55 0h1m-448 1h1m55 0h1m55 0h1m55 0h1m55 0h1m55 0h1m55 0h1m55 0h1m55 0h1m-560 1h1m55 0h1m55 0h1m55 0h1m55 0h1m55 0h1m55 0h1m55 0h1m55 0h1m55 0h2m54 0h2m-281 1h1m55 0h1m55 0h1m55 0h1m112 0h1m-281 1h1m55 0h1m55 0h1m55 0h1m112 0h1m-562 1h1m55 0h1m55 0h1m55 0h2m54 0h2m55 0h1m55 0h1m55 0h2m54 0h2m54 0h2m55 0h2m-563 1h1m55 0h1m55 0h1m56 0h1m55 0h1m55 0h2m54 0h2m55 0h1m55 0h2m54 0h2m55 0h2m-452 1h1m112 0h1m112 0h1m55 0h1m56 0h1m55 0h1m56 0h1m-452 1h1m112 0h1m112 0h1m55 0h1m56 0h1m55 0h1m56 0h1m-565 1h1m55 0h1m56 0h1m55 0h1m56 0h1m55 0h2m55 0h1m55 0h2m55 0h1m55 0h2m55 0h2m-566 1h1m55 0h1m56 0h1m55 0h2m55 0h1m56 0h1m55 0h2m55 0h2m54 0h2m55 0h2m55 0h2m-567 1h1m55 0h1m56 0h1m56 0h1m55 0h2m55 0h2m55 0h1m56 0h1m55 0h2m55 0h2m55 0h2m-512 1h1m283 0h1m56 0h1m56 0h1m56 0h1m56 0h1m-512 1h1m283 0h1m56 0h1m56 0h1m56 0h1m56 0h1m-569 1h1m56 0h1m55 0h2m55 0h2m55 0h2m55 0h2m55 0h2m55 0h2m55 0h2m55 0h2m55 0h2m-570 1h1m56 0h1m56 0h1m56 0h1m56 0h1m56 0h1m56 0h1m56 0h1m56 0h1m56 0h1m56 0h2m-286 1h1m56 0h1m56 0h1m56 0h1m56 0h1m-228 1h1m56 0h1m56 0h1m56 0h1m56 0h1m-514 1h1m56 0h1m56 0h1m56 0h2m55 0h2m56 0h1m56 0h1m56 0h2m55 0h2m55 0h2m-515 1h1m56 0h1m56 0h1m57 0h1m56 0h1m56 0h2m55 0h2m56 0h1m56 0h2m55 0h2m-516 1h1m56 0h1m56 0h2m56 0h1m56 0h2m56 0h1m56 0h1m56 0h2m56 0h1m56 0h2m-230 1h1m56 0h1m57 0h1m56 0h1m57 0h1m-230 1h1m56 0h1m57 0h1m56 0h1m57 0h1m-518 1h1m56 0h1m57 0h1m56 0h2m56 0h1m57 0h1m56 0h2m56 0h1m56 0h2m56 0h2m-519 1h1m56 0h1m57 0h1m57 0h1m56 0h2m56 0h1m57 0h1m56 0h2m56 0h2m56 0h1m-519 1h1m56 0h2m56 0h1m57 0h1m57 0h1m56 0h2m56 0h2m56 0h2m56 0h1m56 0h2m-520 1h1m57 0h1m56 0h2m56 0h2m56 0h1m57 0h1m57 0h1m57 0h1m56 0h2m56 0h2m-521 1h1m57 0h1m57 0h1m57 0h1m56 0h2m56 0h2m56 0h2m56 0h2m56 0h2m56 0h2m-116 1h1m57 0h1m57 0h1m-116 1h1m57 0h1m57 0h1m-523 1h1m57 0h1m57 0h1m57 0h1m57 0h2m56 0h2m56 0h2m57 0h1m57 0h1m57 0h2m-524 1h1m57 0h1m57 0h1m57 0h2m57 0h1m57 0h1m57 0h2m56 0h2m56 0h2m57 0h2m-525 1h1m57 0h1m57 0h2m57 0h1m57 0h1m57 0h2m57 0h1m57 0h2m56 0h2m57 0h1m-525 1h1m57 0h1m58 0h1m57 0h1m57 0h2m57 0h1m57 0h2m57 0h1m57 0h2m56 0h2m-526 1h1m57 0h1m58 0h1m57 0h2m57 0h1m57 0h2m57 0h1m57 0h2m57 0h1m57 0h2m-527 1h1m57 0h1m58 0h1m58 0h1m57 0h2m57 0h1m57 0h2m57 0h2m56 0h2m57 0h2m-528 1h1m57 0h2m57 0h1m58 0h1m58 0h1m57 0h2m57 0h1m58 0h1m57 0h2m57 0h2m-412 1h1m234 0h1m58 0h1m58 0h1m58 0h1m-412 1h1m234 0h1m58 0h1m58 0h1m58 0h1m-530 1h1m58 0h1m58 0h1m57 0h2m57 0h2m57 0h2m57 0h2m57 0h1m58 0h1m58 0h1m-530 1h1m58 0h1m58 0h1m58 0h1m58 0h1m58 0h1m58 0h1m57 0h2m57 0h2m57 0h2m-531 1h1m58 0h1m58 0h1m58 0h1m58 0h1m58 0h2m57 0h2m57 0h2m57 0h2m57 0h2m-532 1h1m58 0h1m58 0h1m58 0h2m57 0h2m58 0h1m58 0h1m58 0h1m58 0h2m57 0h2m-533 1h1m58 0h1m58 0h2m58 0h1m58 0h1m58 0h1m58 0h2m57 0h2m58 0h1m58 0h2m-534 1h1m58 0h1m59 0h1m58 0h1m58 0h2m57 0h2m58 0h1m58 0h2m57 0h2m58 0h1m-534 1h1m58 0h1m59 0h1m58 0h1m59 0h1m58 0h1m58 0h2m58 0h1m58 0h2m57 0h2m-535 1h1m58 0h2m58 0h1m58 0h2m58 0h1m58 0h2m58 0h1m58 0h2m58 0h2m57 0h2m-536 1h1m59 0h1m58 0h1m59 0h1m58 0h2m58 0h1m58 0h2m58 0h2m58 0h1m58 0h2m-537 1h1m59 0h1m58 0h2m58 0h1m59 0h1m58 0h2m58 0h1m59 0h1m58 0h2m58 0h2m-538 1h1m59 0h1m59 0h1m58 0h2m58 0h1m59 0h1m58 0h2m58 0h2m58 0h2m58 0h2m-539 1h1m59 0h1m59 0h1m59 0h1m58 0h2m58 0h2m58 0h2m58 0h1m59 0h1m59 0h1m-539 1h1m59 0h1m59 0h1m59 0h1m59 0h1m59 0h1m59 0h1m58 0h2m58 0h2m58 0h1m-599 1h1m59 0h1m59 0h1m59 0h1m59 0h1m59 0h1m59 0h2m58 0h2m58 0h2m58 0h2m-541 1h1m59 0h1m59 0h1m59 0h1m59 0h2m58 0h2m59 0h1m59 0h1m59 0h1m59 0h2m-542 1h1m59 0h1m59 0h1m59 0h2m59 0h1m59 0h1m59 0h1m59 0h2m58 0h2m59 0h1m-542 1h1m59 0h1m59 0h2m59 0h1m59 0h1m59 0h2m58 0h2m59 0h1m59 0h2m58 0h2m-543 1h1m59 0h1m60 0h1m59 0h1m59 0h1m60 0h1m59 0h1m59 0h2m59 0h1m59 0h2m-544 1h1m59 0h1m60 0h1m59 0h1m59 0h2m59 0h1m59 0h2m59 0h1m59 0h2m59 0h1m-544 1h1m59 0h1m60 0h1m59 0h1m60 0h1m59 0h2m59 0h1m59 0h2m59 0h1m59 0h2m-545 1h1m59 0h2m59 0h2m58 0h3m58 0h2m59 0h2m58 0h3m58 0h3m57 0h4m57 0h3" stroke="#8c0000"/>
<path transform="translate(.5,0)" d="M0 0m62 333v6m0 197v5m0 123v2m0 75v1m1 -412v3m0 208v3m0 121v2m0 75v1m1 -420v7m0 214v4m0 119v2m0 74v1m1 -424v3m0 225v4m0 116v2m0 74v1m1 -429v4m0 232v5m0 113v2m0 73v1m1 -437v7m0 241v3m0 112v1m0 73v2m1 -442v3m0 251v3m0 110v2m0 73v1m1 -447v4m0 257v4m0 108v1m0 72v1m1 -451v4m0 265v3m0 106v2m1 -383v3m0 272v3m0 105v1m1 -388v4m0 278v4m0 102v2m1 -394v4m0 285v2m0 102v3m1 -400v4m0 291v2m0 102v2m1 -405v4m0 297v2m0 101v2m1 -410v4m0 303v2m0 101v2m1 -415v3m0 309v3m0 99v2m1 -418v2m0 315v2m0 99v1m1 -422v3m0 319v3m0 97v2m1 -429v5m0 325v2m0 97v1m1 -434v4m0 332v2m0 96v2m1 -439v3m0 338v3m0 94v2m1 -442v2m0 344v3m0 93v2m1 -448v4m0 349v3m0 91v2m1 -452v3m0 356v3m0 90v1m1 -455v2m0 362v3m0 88v2m1 -461v4m0 367v2m0 87v2m1 -466v4m0 373v2m0 86v2m1 -469v2m0 379v2m0 86v1m1 -473v3m0 383v2m0 85v2m1 -477v2m0 387v3m0 84v2m1 -481v3m0 392v2m0 84v1m1 -486v4m0 396v2m0 84v2m1 -490v2m0 402v2m0 83v2m1 -494v3m0 405v2m0 83v2m1 -498v3m0 410v2m0 83v1m1 -502v3m0 414v3m0 82v2m1 -506v2m0 420v2m0 81v2m1 -510v3m0 176v66m0 181v3m0 81v1m1 -513v2m0 166v13m0 66v13m0 171v3m0 78v2m1 -517v3m0 159v9m0 92v11m0 162v3m0 78v1m1 -521v3m0 154v8m0 112v6m0 159v1m0 78v2m1 -526v3m0 151v6m0 126v9m0 151v2m0 77v2m1 -529v2m0 144v10m0 141v6m0 146v2m0 77v2m1 -533v3m0 143v3m0 157v5m0 143v1m0 77v2m1 -537v3m0 140v6m0 165v6m0 138v1m0 77v2m1 -540v2m0 136v7m0 177v4m0 135v2m0 77v1m1 -543v2m0 131v7m0 188v5m0 131v2m0 77v1m1 -546v2m0 130v3m0 200v4m0 129v1m0 77v2m1 -550v2m0 125v7m0 207v4m0 126v3m0 75v1m1 -553v3m0 123v4m0 218v4m0 124v3m0 74v2m1 -557v2m0 122v4m0 226v2m0 125v1m0 74v2m1 -437v3m0 232v4m0 122v2m0 73v2m1 -446v8m0 239v4m0 120v2m0 72v2m1 -451v4m0 251v4m0 117v2m0 73v1m1 -456v4m0 259v4m0 115v1m0 72v2m1 -461v4m0 267v2m0 114v1m0 73v1m1 -466v4m0 273v4m0 111v2m0 71v2m1 -470v3m0 281v2m0 110v2m0 72v1m1 -473v2m0 286v4m0 108v2m0 70v2m1 -478v4m0 292v3m0 106v2m0 71v1m1 -483v4m0 299v2m0 105v2m0 71v1m1 -488v4m0 305v4m0 103v2m0 70v1m1 -494v5m0 313v3m0 102v1m0 70v1m1 -498v3m0 321v2m0 101v1m0 70v1m1 -501v2m0 326v3m0 99v2m0 69v1m1 -506v4m0 331v2m0 99v1m0 69v1m1 -511v4m0 336v2m0 99v2m0 68v1m1 -514v2m0 342v2m0 98v2m0 68v1m1 -519v4m0 346v2m0 98v1m0 67v1m1 -522v3m0 352v2m0 97v2m1 -458v2m0 357v2m0 96v2m1 -463v4m0 361v2m0 96v1m1 -468v4m0 367v2m0 95v2m1 -473v3m0 373v3m0 93v2m1 -477v3m0 379v2m0 93v1m1 -480v2m0 384v1m0 93v2m1 -485v3m0 387v3m0 92v1m1 -488v2m0 393v2m0 91v1m1 -492v3m0 397v3m0 89v2m1 -497v3m0 403v3m0 87v2m1 -501v3m0 409v2m0 87v1m1 -504v2m0 414v3m0 85v2m1 -509v3m0 419v2m0 84v2m1 -513v3m0 423v2m0 84v2m1 -517v3m0 428v2m0 84v1m1 -520v2m0 433v2m0 83v1m1 -524v3m0 436v2m0 83v2m1 -529v3m0 441v2m0 82v2m1 -533v3m0 209v18m0 219v1m0 82v2m1 -537v3m0 190v22m0 18v23m0 197v2m0 82v1m1 -541v3m0 182v11m0 63v13m0 186v1m0 82v2m1 -545v2m0 175v10m0 87v10m0 177v2m0 81v2m1 -548v2m0 168v9m0 107v8m0 171v1m0 81v2m1 -552v3m0 163v7m0 124v7m0 165v2m0 80v2m1 -556v3m0 160v6m0 138v7m0 160v2m0 80v1m1 -559v2m0 156v7m0 151v5m0 156v3m0 79v2m1 -563v2m0 151v7m0 163v7m0 152v3m0 77v2m1 -566v2m0 145v8m0 177v5m0 149v2m0 77v2m1 -570v3m0 144v3m0 190v5m0 146v2m0 76v2m1 -573v2m0 139v8m0 198v5m0 142v2m0 76v2m1 -576v2m0 137v4m0 211v3m0 141v1m0 77v1m1 -580v3m0 135v4m0 218v4m0 138v2m0 76v2m1 -586v4m0 134v4m0 226v5m0 134v1m0 77v1m1 -588v2m0 134v4m0 235v3m0 132v1m0 77v1m1 -591v2m0 132v4m0 242v4m0 129v2m0 76v2m1 -595v2m0 129v5m0 250v3m0 127v2m0 76v1m1 -598v3m0 127v4m0 258v2m0 127v1m0 76v2m1 -602v2m0 126v4m0 264v3m0 125v3m0 74v2m1 -605v2m0 123v5m0 271v4m0 123v2m0 74v2m1 -609v3m0 121v4m0 280v3m0 122v2m0 73v2m1 -612v2m0 119v5m0 287v2m0 122v2m0 72v2m1 -616v3m0 117v4m0 294v4m0 119v2m0 72v2m1 -619v2m0 118v2m0 302v3m0 118v1m0 72v2m1 -504v4m0 307v2m0 117v2m0 72v1m1 -509v4m0 313v4m0 114v2m0 71v2m1 -514v4m0 321v2m0 113v2m0 72v1m1 -517v2m0 327v3m0 112v1m0 71v2m1 -522v4m0 332v2m0 111v1m0 72v1m1 -528v5m0 338v3m0 109v2m0 70v2m1 -531v2m0 346v3m0 107v2m0 71v1m1 -535v3m0 351v2m0 107v2m0 70v1m1 -538v2m0 356v3m0 105v2m0 70v1m1 -543v4m0 361v2m0 105v1m0 70v1m1 -549v5m0 367v3m0 103v1m0 70v1m1 -552v2m0 375v2m0 102v2m0 69v1m1 -556v3m0 379v3m0 100v2m0 69v1m1 -560v3m0 385v2m0 100v2m0 68v1m1 -564v3m0 389v1m0 101v2m0 68v1m1 -567v2m0 393v2m0 100v2m0 67v1m1 -570v3m0 397v2m0 99v3m1 -507v3m0 402v1m0 100v2m1 -511v3m0 406v2m0 99v2m1 -515v3m0 411v2m0 98v2m1 -519v3m0 416v2m0 98v2m1 -525v4m0 421v2m0 97v2m1 -528v2m0 427v2m0 96v2m1 -531v2m0 431v2m0 96v2m1 -535v2m0 435v2m0 95v2m1 -539v3m0 438v2m0 95v2m1 -543v3m0 443v2m0 94v2m1 -547v3m0 448v3m0 93v2m1 -553v4m0 454v2m0 92v2m1 -557v3m0 460v3m0 90v2m1 -560v2m0 466v2m0 90v1m1 -563v2m0 470v2m0 89v1m1 -567v3m0 474v2m0 88v2m1 -572v3m0 479v1m0 88v2m1 -576v3m0 483v2m0 87v2m1 -579v2m0 488v2m0 86v2m1 -582v2m0 492v1m0 87v1m1 -586v3m0 495v2m0 86v2m1 -590v2m0 221v56m0 223v1m0 86v2m1 -594v3m0 211v12m0 56v12m0 212v1m0 86v2m1 -598v3m0 200v14m0 80v9m0 204v2m0 86v1m1 -603v4m0 196v7m0 103v9m0 197v1m0 86v1m1 -607v3m0 189v11m0 119v6m0 192v2m0 85v2m1 -611v2m0 185v7m0 136v7m0 187v1m0 85v2m1 -615v3m0 179v8m0 150v6m0 182v2m0 84v2m1 -618v2m0 178v4m0 164v6m0 178v2m0 83v2m1 -621v2m0 172v8m0 174v5m0 174v2m0 83v2m1 -624v2m0 170v4m0 187v6m0 170v3m0 82v1m1 -627v2m0 167v5m0 197v5m0 168v1m0 82v2m1 -631v2m0 165v4m0 207v4m0 165v2m0 81v2m1 -634v2m0 163v4m0 215v5m0 162v1m0 81v2m1 -638v3m0 156v9m0 224v3m0 160v2m0 80v2m1 -642v3m0 154v5m0 236v4m0 157v2m0 80v2m1 -646v3m0 153v4m0 245v5m0 154v1m0 80v2m1 -650v3m0 154v2m0 254v3m0 151v2m0 80v2m1 -653v2m0 153v4m0 259v3m0 149v2m0 81v1m1 -656v2m0 151v4m0 266v3m0 148v1m0 81v1m1 -659v2m0 148v5m0 273v5m0 144v2m0 80v2m1 -663v2m0 146v4m0 283v3m0 142v2m0 80v1m1 -666v3m0 145v3m0 290v3m0 141v2m0 79v2m1 -670v2m0 144v4m0 296v3m0 139v3m0 78v2m1 -673v2m0 141v5m0 303v3m0 139v1m0 78v2m1 -676v2m0 139v4m0 311v2m0 138v2m0 77v2m1 -679v2m0 138v3m0 317v3m0 136v2m0 77v2m1 -682v2m0 136v4m0 323v3m0 135v1m0 78v1m1 -685v2m0 134v4m0 330v1m0 135v2m0 76v2m1 -688v2m0 133v3m0 335v3m0 133v2m0 77v1m1 -690v1m0 132v3m0 341v2m0 132v2m0 77v1m1 -560v2m0 346v3m0 131v1m0 77v1m1 -564v3m0 351v3m0 129v1m0 77v1m1 -568v3m0 357v2m0 128v2m0 76v1m1 -572v3m0 362v3m0 126v2m0 76v1m1 -576v3m0 368v2m0 126v2m0 75v2m1 -581v3m0 373v3m0 124v2m0 76v1m1 -586v4m0 379v2m0 124v1m0 75v1m1 -589v3m0 385v3m0 122v1m1 -517v3m0 391v2m0 121v2m1 -522v3m0 396v2m0 121v1m1 -526v3m0 401v3m0 119v2m1 -531v3m0 407v2m0 118v2m1 -536v4m0 412v2m0 117v2m1 -540v3m0 418v3m0 116v2m1 -546v4m0 424v2m0 115v2m1 -550v3m0 430v2m0 114v2m1 -554v3m0 435v2m0 114v2m1 -559v3m0 440v1m0 114v2m1 -562v2m0 444v3m0 113v1m1 -565v2m0 449v2m0 112v2m1 -570v3m0 452v2m0 112v2m1 -575v4m0 457v1m0 113v1m1 -580v4m0 462v2m0 112v2m1 -584v2m0 468v1m0 112v2m1 -587v2m0 471v2m0 112v2m1 -592v3m0 475v2m0 111v2m1 -595v2m0 480v1m0 111v2m1 -599v3m0 483v2m0 111v1m1 -603v3m0 488v2m0 110v2m1 -607v2m0 493v2m0 109v2m1 -610v2m0 497v2m0 108v2m1 -614v3m0 501v1m0 109v2m1 -618v2m0 505v2m0 108v2m1 -622v3m0 509v2m0 107v2m1 -626v3m0 514v3m0 106v2m1 -631v3m0 520v2m0 105v2m1 -635v3m0 525v2m0 104v2m1 -639v3m0 530v3m0 103v2m1 -643v2m0 536v2m0 102v2m1 -647v3m0 540v2m0 102v1m1 -651v3m0 544v2m0 101v2m1 -654v2m0 549v2m0 101v2m1 -658v2m0 553v2m0 100v2m1 -661v2m0 556v1m0 102v2m1 -665v2m0 559v2m0 101v2m1 -668v2m0 563v2m0 100v2m1 -671v2m0 566v2m0 100v2m1 -674v2m0 570v2m0 99v2m1 -676v1m0 573v2m0 100v2m1 -102v2m0 99v2m1 -102v2m0 99v2m1 -411v35m0 275v2m0 99v1m1 -434v22m0 35v17m0 260v1m0 99v2m1 -447v11m0 74v11m0 250v3m0 97v2m1 -460v12m0 96v10m0 243v2m0 96v2m1 -469v8m0 118v8m0 236v3m0 96v1m1 -479v9m0 134v7m0 232v1m0 96v2m1 -485v4m0 150v4m0 229v2m0 95v2m1 -495v9m0 158v5m0 225v2m0 96v1m1 -501v5m0 172v7m0 220v1m0 96v1m1 -507v5m0 184v4m0 216v2m0 96v2m1 -518v9m0 193v4m0 213v2m0 97v1m1 -524v5m0 206v7m0 208v1m0 97v1m1 -530v5m0 218v4m0 205v2m0 96v2m1 -538v6m0 227v4m0 202v3m0 96v1m1 -543v4m0 237v4m0 201v2m0 94v1m1 -545v2m0 245v4m0 199v2m1 -456v4m0 251v3m0 197v3m1 -464v6m0 258v4m0 195v2m1 -469v4m0 268v4m0 193v2m1 -474v3m0 276v3m0 192v1m1 -479v4m0 282v4m0 189v1m1 -484v4m0 290v3m0 187v2m1 -489v3m0 297v4m0 184v2m1 -494v4m0 304v3m0 183v2m1 -501v5m0 311v3m0 181v2m1 -506v4m0 319v4m0 179v2m1 -511v3m0 327v3m0 177v3m1 -516v3m0 333v3m0 176v2m1 -521v4m0 339v2m0 175v3m1 -528v5m0 345v3m0 174v2m1 -533v4m0 353v3m0 173v2m1 -538v3m0 360v3m0 171v2m1 -543v4m0 366v3m0 170v2m1 -548v3m0 373v3m0 169v2m1 -553v3m0 379v3m0 167v2m1 -557v3m0 385v1m0 168v2m1 -561v2m0 389v3m0 167v2m1 -565v2m0 394v2m0 166v3m1 -570v3m0 398v2m0 166v2m1 -575v4m0 403v2m0 166v2m1 -581v4m0 409v3m0 164v2m1 -586v4m0 416v3m0 163v2m1 -591v3m0 423v2m0 163v2m1 -595v2m0 428v3m0 161v2m1 -599v3m0 433v2m0 161v2m1 -604v3m0 438v2m0 161v2m1 -608v2m0 443v2m0 160v2m1 -611v2m0 447v3m0 159v2m1 -616v3m0 452v2m0 159v2m1 -622v4m0 457v3m0 157v3m1 -628v4m0 464v2m0 157v2m1 -632v3m0 470v2m0 157v2m1 -637v3m0 475v3m0 156v2m1 -642v3m0 481v2m0 156v1m1 -645v2m0 486v2m0 155v2m1 -650v3m0 490v4m0 153v2m1 -655v3m0 497v2m0 153v2m1 -659v2m0 502v2m0 152v2m1 -662v2m0 506v2m0 152v2m1 -666v2m0 510v3m0 150v3m1 -671v3m0 515v2m0 150v2m1 -674v2m0 519v2m0 151v2m1 -679v3m0 523v1m0 152v2m1 -682v1m0 527v2m0 151v3m1 -154v2m0 151v2m1 -153v2m0 151v2m1 -153v2m0 151v2m1 -153v2m0 150v3m1 -153v2m0 151v2m1 -153v3m0 150v2m1 -152v2m0 150v1m1 -152v3m0 149v1m1 -150v2m0 148v1m1 -149v4m1 0v3m1 0v3m1 0v2m1 0v2m1 0v2m1 0v3m1 -1v2m1 0v3m1 -1v2m1 0v2m1 0v2m1 0v2m1 0v3m1 -1v4m1 0v3m1 0v2m1 0v2m1 0v2m1 -1v2m1 0v2m1 -1v3m1 0v3m1 0v3m1 0v3m1 0v3m1 -1v2m1 0v3m1 -1v3m1 -1v3m1 0v3m1 -1v4m1 -1v3m1 0v3m1 -1v3m1 0v3m1 0v3m1 -1v4m1 -1v4m1 -1v4m1 -1v4m1 -1v3m1 0v3m1 -439v42m0 397v3m1 -460v18m0 42v17m0 383v4m1 -478v14m0 77v13m0 373v4m1 -490v9m0 104v13m0 363v3m1 -502v10m0 126v9m0 357v4m1 -512v6m0 145v5m0 355v3m1 -519v5m0 156v9m0 349v3m1 -533v11m0 170v5m0 347v3m1 -541v5m0 186v8m0 342v3m1 -550v6m0 199v5m0 340v3m1 -558v5m0 210v5m0 338v3m1 -567v6m0 220v5m0 335v4m1 -575v5m0 231v5m0 334v4m1 -583v4m0 241v4m0 334v2m1 -589v4m0 249v5m0 331v1m1 -596v6m0 258v4m1 -273v5m0 268v5m1 -282v4m0 278v4m1 -291v5m0 286v4m1 -300v5m0 295v5m1 -308v3m0 305v4m1 -315v3m0 312v4m1 -323v4m0 319v6m1 -334v5m0 329v4m1 -344v6m0 338v3m1 -351v4m0 347v4m1 -358v3m0 355v5m1 -367v4m0 363v4m1 -375v4m0 371v3m1 -380v2m0 378v5m1 -387v2m0 385v4m1 -394v3m0 391v5m1 -403v4m0 399v3m1 -411v5m0 406v5m1 -420v4m0 416v4m1 -428v4m0 424v5m1 -435v2m0 433v4m1 -442v3m0 439v5m1 -450v3m0 447v2m1 -455v3m0 452v4m1 -462v3m0 459v4m1 -469v3m0 466v4m1 -475v2m0 473v6m1 -484v3m0 481v5m1 -490v1m0 489v5m1 0v5m1 0v4m1 0v6m1 0v7m1 0v5m1 0v4m1 0v4m1 0v4m1 0v5m1 0v7m1 0v14m1 0v7m1 0v5m1 0v5m1 0v13m1 -1v5m1 -1v5m1 0v12m1 0v7m1 -1v9m1 0v11m1 -1v12m1 -1v11m1 0v11m1 -1v10m1 0v8m1 0v8m1 0v5m59 -21v21m1 -36v16m1 -27v11m1 -22v11m1 -20v10m1 -19v10m1 -22v12m1 -19v8m1 -22v14m1 -19v6m1 -12v6m1 -17v11m1 -19v8m1 -13v5m1 -10v5m1 -10v5m1 -11v7m1 -20v13m1 -20v7m1 -13v6m1 -12v6m1 -12v6m1 -13v7m1 -13v6m1 -14v8m1 -14v6m1 -16v10m1 -17v7m1 -13v6m1 -14v8m1 -15v7m1 -15v8m1 -17v9m1 -18v9m1 -16v7m1 -17v10m1 -21v11m1 -24v13m1 -29v16m1 -34v18m1 -40v22m1 -46v24m1 -72v48m1 -90v42m1 -65v23m1 -39v16m1 -32v16m1 -27v11m1 -22v11m1 -18v7m1 -19v12m1 -19v7m1 -14v7m1 -13v6m1 -13v7m1 -14v7m1 -15v8m1 -13v5m1 -9v4m1 -10v6m0 644v3m1 -658v5m0 641v9m1 -659v4m0 639v8m1 -658v7m0 637v6m1 -656v6m0 638v6m1 -654v4m0 638v6m1 -653v5m0 637v6m1 -652v4m0 637v6m1 -651v4m0 637v5m1 -650v4m0 636v5m1 -647v2m0 635v5m1 -9v5m1 -9v4m1 -8v4m1 -9v5m1 -9v4m1 -9v5m1 -10v6m1 -9v4m1 -7v3m1 -7v4m1 -10v7m1 -11v4m1 -6v3m1 -6v3m1 -7v4m1 -8v5m1 -9v4m1 -8v4m1 -7v3m1 -6v3m1 -7v4m1 -6v2m1 -5v3m1 -6v3m1 -6v3m1 -5v3m1 -6v3m1 -7v4m1 -8v4m1 -8v4m1 -7v3m1 -7v4m1 -6v2m1 -5v3m1 -6v3m1 -6v3m1 -5v2m1 -5v3m1 -6v3m1 -6v3m1 -5v2m1 -6v4m1 -6v2m1 -5v3m1 -5v2m1 -5v3m1 -6v3m1 -5v2m1 -6v4m1 -7v3m0 220v5" stroke="#00008c"/>
<g clip-path="url(#cp)"><path d="M101.5 40.5L-618.5 760.5M161.5 40.5L-558.5 760.5M221.5 40.5L-498.5 760.5M281.5 40.5L-438.5 760.5M341.5 40.5L-378.5 760.5M401.5 40.5L-318.5 760.5M461.5 40.5L-258.5 760.5M521.5 40.5L-198.5 760.5M581.5 40.5L-138.5 760.5M641.5 40.5L-78.5 760.5M701.5 40.5L-18.5 760.5M761.5 40.5L41.5 760.5M821.5 40.5L101.5 760.5M881.5 40.5L161.5 760.5M941.5 40.5L221.5 760.5M1001.5 40.5L281.5 760.5M1061.5 40.5L341.5 760.5M1121.5 40.5L401.5 760.5M1181.5 40.5L461.5 760.5M1241.5 40.5L521.5 760.5M1301.5 40.5L581.5 760.5M1361.5 40.5L641.5 760.5" stroke="#fff"/></g>
<path d="M56 50.5H667M56 321.5H667M56 449.5H667M56 529.5H667M56 586.5H667M56 630.5H667M56 665.5H667M56 694.5H667M56 719.5H667M56 740.5H667" stroke="#fff"/>
<rect x="61.5" y="50.5" width="600" height="699" stroke="#fff"/>
<path d="M62 706.5H661" stroke="#f0f"/>
<path transform="translate(.5,0)" d="M0 0m70 703v5m7 -15v5m2 13v5m18 -23v5m6 19v5m27 7v5m4 -8v5m8 -28v5m15 24v5m7 -6v5m9 -25v5m10 1v5m3 4v5m14 -2v5m11 -8v11m2 -20v5m5 -11v5m3 -13v5m2 -15v5m5 -33v5" stroke="#fff"/><path transform="translate(0,.5)" d="M0 0m226 667h2m1 0h2m-156 28h2m1 0h2m15 0h2m1 0h2m121 0h2m1 0h2m-158 10h2m1 0h2m67 0h2m1 0h2m74 0h2m1 0h2m-147 8h2m1 0h2m89 0h2m1 0h2m40 0h2m1 0h2m-120 6h2m1 0h2m75 0h2m1 0h2m25 0h2m1 0h2m-84 9h2m1 0h2m47 0h2m1 0h2m20 0h2m1 0h2m-86 3h2m1 0h2m65 0h2m1 0h2m6 0h2m1 0h2m-52 2h2m1 0h2m-12 1h2m1 0h2m49 0h2m1 0h2" stroke="#fff"/>
<path transform="translate(0,.5)" d="M0 0m62 682h1m0 1h1m0 1h1m0 1h2m0 1h1m0 1h1m0 1h1m0 1h1m0 1h1m0 1h1m0 1h2m0 1h1m0 1h1m0 1h1m-2 1h1m-1 1h1m-2 1h1m-2 1h1m-2 1h1m-1 1h1m-2 1h1m-2 1h1m-1 1h1m-2 1h1m0 1h1m0 1h1m0 1h1m0 1h2m0 1h1m0 1h1m0 1h1m0 1h2m0 1h4m0 1h4m0 1h4m0 1h4m0 1h4m0 1h4m0 1h4m0 1h3m0 1h4m0 1h3m0 1h3m0 1h4m0 1h3m0 1h4m0 1h2m-2 1h1m-3 1h2m-3 1h5m0 1h9m0 1h9m0 1h5" stroke="#e07000"/>
<path transform="translate(0,.5)" d="M0 0m62 681h1m0 1h2m0 1h3m0 1h2m0 1h3m0 1h3m0 1h2m0 1h3m0 1h2m0 1h3m0 1h2m0 1h3m0 1h3m0 1h2m0 1h4m0 1h4m0 1h5m0 1h4m0 1h5m0 1h4m0 1h5m0 1h4m0 1h5m0 1h4m0 1h4m0 1h4m0 1h4m0 1h4m0 1h4m0 1h4m0 1h4m0 1h4m0 1h2m0 1h2m0 1h2m0 1h1m0 1h2m0 1h2m0 1h1m-1 1h1m0 1h1m-1 1h1m-1 1h1m0 1h1m-1 1h1m-1 1h1m0 1h1m-1 1h3m0 1h4m0 1h5m-6 1h9m-27 1h18m-31 1h13m-17 1h4" stroke="#ff0"/>
<path transform="translate(.5,0)" d="M0 0m211 725v10m1 -14v4m1 -6v2m1 -4v2m1 -3v1m1 -3v2m1 -3v1m1 -3v2m1 -4v2m1 -6v4m1 -8v4m1 -8v4m1 -7v3m1 -7v4m1 -8v4m1 -10v6m1 -14v8m1 -16v8m1 -14v6m1 -9v3" stroke="#c8c800"/>
<path transform="translate(.5,0)" d="M0 0m353 304v24m1 -45v21m0 24v15m1 -70v10m0 60v12m1 -93v11m0 82v9m1 -113v11m0 102v8m1 -131v10m0 121v9m1 -149v9m0 140v8m1 -164v7m0 157v7m1 -177v6m0 171v7m1 -191v7m0 184v7m1 -205v7m0 198v6m1 -217v6m0 211v5m1 -228v6m0 222v5m1 -237v4m0 233v5m1 -246v4m0 242v5m1 -256v5m0 251v4m1 -264v4m0 260v4m1 -273v5m0 268v3m1 -280v4m0 276v4m1 -288v4m0 284v4m1 -296v4m0 292v3m1 -303v4m0 299v3m1 -309v3m0 306v3m1 -316v4m0 312v3m1 -323v4m0 319v3m1 -329v3m0 326v3m1 -336v4m0 332v3m1 -342v3m0 339v2m1 -348v4m0 344v2m1 -354v4m0 350v2m1 -359v3m0 356v2m1 -365v4m0 361v3m1 -371v3m0 368v4m1 -378v3m0 375v3m1 -385v4m0 381v4m1 -392v3m0 389v3m1 -398v3m0 395v4m1 -405v3m0 402v3m1 -412v4m0 408v4m1 -419v3m0 416v3m1 -425v3m0 422v2m1 -430v3m0 427v3m1 -436v3m0 433v3m1 -443v4m0 439v2m1 -448v3m0 445v3m1 -454v3m0 451v3m1 -460v3m0 457v3m1 -465v2m0 463v4m1 -472v3m0 469v3m1 -478v3m0 475v3m1 -484v3m0 481v4m1 -491v3m0 488v3m1 -496v2m0 494v3m1 -502v3m0 499v3m1 0v4m1 0v3m1 0v3m1 0v3m1 0v2m1 0v3m1 0v2m1 0v3m1 0v3m1 0v2m1 0v3m1 0v4m1 0v3m1 0v3m1 0v3m1 0v3m1 0v3m1 0v3m1 0v3m1 0v3m1 0v4m1 0v3m1 0v3m1 0v3m1 0v4m1 0v5m1 0v4m1 0v5m1 0v5m1 0v4m1 0v5m1 0v4m1 0v3m1 0v3m1 0v4m1 0v5m1 0v5m1 0v6m1 0v5m1 0v2" stroke="#ffb4ff"/><path transform="translate(0,.5)" d="M0 0m407 51h1m39 647h1m0 1h1m0 1h1m0 1h2m0 1h1m0 1h1m0 1h1m0 1h1m0 1h1m0 1h1m0 1h1m0 1h2m0 1h1m0 1h1m0 1h2m0 1h2m0 1h2m0 1h2m0 1h1m0 1h2m0 1h1m0 1h1m0 1h2m0 1h1m0 1h1m0 1h2m0 1h1m0 1h2m0 1h1m0 1h2m0 1h1m0 1h1m0 1h2m0 1h1m0 1h1m0 1h2m0 1h1" stroke="#ffb4ff"/>
<path transform="translate(.5,0)" d="M0 0m341 291v41m1 -51v10m0 41v15m1 -77v11m0 66v9m1 -96v10m0 86v9m1 -115v10m0 105v10m1 -135v10m0 125v9m1 -151v7m0 144v8m1 -165v6m0 159v7m1 -177v5m0 172v7m1 -189v5m0 184v7m1 -202v6m0 196v7m1 -214v5m0 209v6m1 -225v5m0 220v4m1 -233v4m0 229v5m1 -243v5m0 238v5m1 -253v5m0 248v4m1 -262v5m0 257v4m1 -270v4m0 266v3m1 -278v5m0 273v2m1 -284v4m0 280v3m1 -291v4m0 287v3m1 -298v4m0 294v3m1 -305v4m0 301v3m1 -312v4m0 308v3m1 -318v3m0 315v3m1 -325v4m0 321v4m1 -333v4m0 329v3m1 -340v4m0 336v3m1 -346v3m0 343v3m1 -353v4m0 349v3m1 -360v4m0 356v3m1 -367v4m0 363v2m1 -373v4m0 369v3m1 -379v3m0 376v3m1 -385v3m0 382v3m1 -392v4m0 388v3m1 -398v3m0 395v2m1 -403v3m0 400v3m1 -409v3m0 406v3m1 -416v4m0 412v3m1 -422v3m0 419v3m1 -428v3m0 425v2m1 -433v3m0 430v3m1 -439v3m0 436v3m1 -446v4m0 442v3m1 -452v3m0 449v3m1 -458v3m0 455v2m1 -463v3m0 460v3m1 -468v2m0 466v3m1 -474v3m0 471v3m1 -480v3m0 477v3m1 -486v3m0 483v3m1 -492v3m0 489v2m1 -496v2m0 494v3m1 -502v3m0 499v3m1 -506v1m0 505v3m1 0v3m1 0v2m1 0v3m1 0v3m1 0v2m1 0v3m1 0v3m1 0v2m1 0v2m1 0v2m1 0v2m1 0v2m1 0v3m1 0v4m1 0v4m1 0v4m1 0v3m1 0v3m1 0v3m1 0v2m1 0v3m1 0v3m1 0v3m1 0v3m1 0v4m1 0v3m1 0v4m1 0v3m1 0v4m1 0v3m1 0v4m1 0v3m1 0v4m1 0v4m1 0v6m1 0v5m1 0v3m1 0v3m1 0v4m1 0v4m1 0v5m1 0v4m1 0v4m1 0v4m1 0v2" stroke="#f0f"/>
<path transform="translate(0,.5)" d="M0 0m441 706h1m0 1h2m0 1h1m0 1h1m0 1h2m0 1h1m0 1h1m0 1h2m0 1h1m0 1h1m0 1h2m0 1h1m0 1h1m0 1h2m0 1h1m0 1h2m0 1h1m0 1h1m0 1h2m0 1h1m0 1h1m0 1h2m0 1h1m0 1h1m0 1h2m0 1h1m0 1h1m0 1h2m0 1h1" stroke="#f0f"/>
<path transform="translate(.5,0)" d="M0 0m423 735v1m1 -3v2m1 -4v2m1 -3v1m1 -3v2m1 -3v1m1 -3v2m1 -4v2m1 -3v1m1 -3v2m1 -3v1m1 -3v2m1 -4v2m1 -3v1m1 -3v2m1 -3v1m1 -3v2m1 -4v2m1 -3v1" stroke="#f0f"/>
<path transform="translate(.5,0)" d="M0 0m67 718v5m0 2v5m1 -1v5m6 -2v5m5 -521v5m0 490v5m4 -37v5m2 -540v5m0 123v5m0 426v5m1 -53v5m1 -22v5m0 3v5m0 14v6m0 22v5m2 -35v6m1 -51v5m2 -15v5m2 80v5m0 5v5m3 -112v5m1 -329v5m1 455v5m4 -26v5m2 9v9m4 -162v5m0 102v5m1 34v5m5 -165v5m1 103v5m5 -455v5m0 434v5m0 3v5m6 -30v5m0 3v5m1 -108v5m5 60v5m0 5v5m1 -479v5m0 209v5m5 147v5m0 81v5m12 -110v5m0 76v5m6 -107v5m0 83v5m1 -171v5m7 24v5m4 117v5m6 -190v5m6 147v5m12 -24v5m6 -104v5m0 73v5m6 -54v5m55 101v5m7 11v5m11 -38v5m5 -24v5m5 62v5m9 9v5m6 -156v5m4 44v5m1 -83v5m1 50v5m7 132v5m9 7v5m2 -243v5m1 245v5m7 5v5m7 5v5m6 5v5m7 -173v5m2 -28v5m2 -133v5m0 167v5m1 -75v5m3 84v5m2 131v5m5 -259v5m1 130v5m1 123v5m3 -117v5m3 10v5m4 9v5m4 86v5m2 -84v5m2 -317v5m3 -61v5m0 375v5m3 -243v5m0 245v5m5 5v5m2 43v5m2 -43v5m2 5v5m0 36v5m6 -38v5m3 4v5m3 33v5m4 34v5m1 -34v5m1 3v5m1 13v5m1 -71v6m1 -4v6m1 47v5m0 2v5m2 -51v5m6 -365v5m6 369v5m12 5v5m6 3v5m2 -572v5m2 569v5m4 2v5m4 -1v5m3 -2v5m12 -465v5m56 -61v5m10 -170v2m60 91v5" stroke="#fff"/><path transform="translate(0,.5)" d="M0 0m83 146h2m1 0h2m44 0h2m1 0h2m324 0h2m1 0h2m146 0h2m1 0h2m-540 72h2m1 0h2m37 0h2m1 0h2m267 0h2m1 0h2m146 0h2m1 0h2m-464 56h2m1 0h2m8 0h2m1 0h2m287 0h2m1 0h2m93 0h2m1 0h2m-134 47h2m1 0h2m73 0h2m1 0h2m-308 39h2m1 0h2m36 0h2m1 0h2m147 0h2m1 0h2m64 0h2m1 0h2m-243 34h2m1 0h2m36 0h2m1 0h2m104 0h2m1 0h2m57 0h2m1 0h2m-210 29h2m1 0h2m35 0h2m1 0h2m93 0h2m1 0h2m52 0h2m1 0h2m-56 26h2m1 0h2m43 0h2m1 0h2m-205 23h2m1 0h2m37 0h2m1 0h2m103 0h2m1 0h2m43 0h2m1 0h2m-209 21h2m1 0h2m37 0h2m1 0h2m85 0h2m1 0h2m71 0h2m1 0h2m-225 19h2m1 0h2m37 0h2m1 0h2m92 0h2m1 0h2m80 0h2m1 0h2m-108 17h2m1 0h2m106 0h2m1 0h2m-248 16h2m1 0h2m36 0h2m1 0h2m93 0h2m1 0h2m103 0h2m1 0h2m-265 15h2m1 0h2m37 0h2m1 0h2m126 0h2m1 0h2m85 0h2m1 0h2m-274 14h2m1 0h2m37 0h2m1 0h2m141 0h2m1 0h2m80 0h2m1 0h2m-71 12h2m1 0h2m67 0h2m1 0h2m-296 12h2m1 0h2m37 0h2m1 0h2m181 0h2m1 0h2m63 0h2m1 0h2m-306 12h2m1 0h2m36 0h2m1 0h2m190 0h2m1 0h2m63 0h2m1 0h2m-311 10h2m1 0h2m38 0h2m1 0h2m197 0h2m1 0h2m61 0h2m1 0h2m-64 10h2m1 0h2m58 0h2m1 0h2m-323 10h2m1 0h2m35 0h2m1 0h2m216 0h2m1 0h2m54 0h2m1 0h2m-325 8h2m1 0h2m35 0h2m1 0h2m233 0h2m1 0h2m43 0h2m1 0h2m-332 9h2m1 0h2m30 0h2m1 0h2m246 0h2m1 0h2m39 0h2m1 0h2m-331 8h1m1 0h2m27 0h2m1 0h2m260 0h2m1 0h2m36 0h2m2 0h1m-345 3h2m1 0h1m25 0h2m1 0h2m282 0h2m1 0h2m20 0h1m2 0h2m-350 13h2m1 0h2m21 0h2m1 0h2m293 0h2m1 0h2m19 0h2m1 0h2m-349 14h2m1 0h2m2 0h2m1 0h2m320 0h2m1 0h2m19 0h2m1 0h2m-363 10h2m1 0h2m4 0h2m1 0h2m325 0h2m1 0h2m26 0h2m1 0h2m-381 8h2m1 0h2m19 0h2m1 0h2m317 0h2m1 0h2m31 0h2m1 0h2m-399 7h2m1 0h2m38 0h2m1 0h2m314 0h2m1 0h2m31 0h2m1 0h2m-403 7h2m1 0h2m33 0h2m1 0h2m319 0h2m1 0h2m35 0h2m1 0h2m-406 4h2m1 0h2m32 0h2m1 0h2m316 0h2m1 0h2m42 0h2m1 0h2m-404 3h2m1 0h2m20 0h2m1 0h2m319 0h2m1 0h2m48 0h2m1 0h2" stroke="#fff"/>
<path transform="translate(.5,0)" d="M0 0m83 680v3m1 -6v3m0 3v4m1 -14v4m0 10v3m1 -37v6m0 11v3m0 17v4m1 -65v24m0 6v2m0 7v2m0 24v2m1 -71v4m0 32v3m0 2v2m0 28v2m1 -76v3m0 39v2m1 -48v4m1 -9v5m0 82v2m1 -384v4m0 287v4m1 -303v8m0 289v2m0 94v2m1 -403v8m0 294v3m1 -313v8m0 300v2m1 -318v8m0 306v2m1 -324v8m0 311v3m1 -327v5m0 317v2m1 -326v2m0 319v3m1 -327v3m0 319v2m1 -326v2m0 320v2m1 -326v2m0 320v2m1 -327v3m0 320v2m1 -327v2m0 321v2m1 -328v3m0 321v2m0 145v5m1 -478v2m0 469v2m1 -476v3m0 323v2m1 -330v2m0 324v2m1 -331v3m0 324v2m0 146v2m1 -479v2m0 325v2m1 -331v2m0 325v2m1 -332v3m0 324v3m1 -332v2m0 325v2m1 -332v3m0 325v2m1 -332v2m0 326v2m1 -333v3m1 -5v2m1 -4v2m0 329v2m1 -336v3m1 -5v2m1 -6v4m1 -10v6m1 -11v5m1 -11v6m1 -11v5m0 349v2m1 -362v6m1 -12v6m1 -11v5m0 362v2m1 -375v6m0 364v3m1 -378v5m0 368v2m1 -381v6m0 370v3m1 -384v5m0 373v3m1 -387v6m0 376v2m1 -393v9m0 379v3m1 -405v14m0 221v2m0 161v4m1 -416v14m0 395v3m1 -426v14m0 406v3m1 -436v13m0 267v2m0 147v4m1 -447v14m0 427v2m1 -457v14m0 297v2m0 140v2m1 -461v6m1 314v2m0 134v2m1 -4v2m2 -132v2m0 125v2m2 -126v2m0 119v2m1 -4v2m2 -117v2m0 110v2m1 -4v2m1 -109v2m0 101v4m1 -7v3m1 -100v2m0 91v4m1 -7v3m1 -7v4m1 -86v2m0 67v13m1 -80v3m0 51v13m1 -64v4m0 43v4m1 -47v4m0 35v4m1 -39v4m0 27v4m1 -31v4m0 20v3m1 -23v4m0 12v4m1 -16v4m0 4v4m1 -8v4" stroke="#ff1493"/><path transform="translate(0,.5)" d="M0 0m93 322h1m0 1h1m0 1h1m0 1h1m0 1h1m0 1h1m0 1h2m0 1h1m0 1h1m0 1h1m0 1h1m0 1h1m0 1h1m0 1h1m0 1h1m0 1h1m0 1h1m0 1h1m0 1h1m0 1h2m0 1h1m0 1h1m0 1h1m0 1h1m0 1h1m0 1h1m0 1h1m0 1h1m0 1h1m0 1h1m0 1h1m0 1h1m0 1h2m0 1h1m0 1h1m0 1h1m0 1h1m0 1h1m0 1h1m1 3h1m0 1h1m1 3h1m1 3h1m1 3h1m0 1h1m1 3h1m1 3h1m0 1h1m1 3h1m1 3h1m1 3h1m0 1h1m-8 105h1m-4 5h1m-3 3h1m-4 5h1m-15 37h1m-2 1h1m-3 3h1m-2 1h1m-2 1h1m-2 1h1m-2 1h1m-2 1h1m-3 3h1m-2 1h1m-11 20h1m-18 119h1m0 1h1m1 3h1m1 3h1m0 1h1m0 1h1m0 1h1m0 1h2m0 1h1m0 1h1m0 1h1m0 1h1m0 1h1m0 1h1m0 1h1m0 1h1m0 1h1m0 1h1m0 1h1m-3 3h1m-2 1h1m-5 8h2m-4 1h2m-4 1h2" stroke="#ff1493"/>
<path transform="translate(.5,0)" d="M0 0m67 720v9m1 0v3m11 -520v11m1 -23v12m0 11v9m0 479v2m1 -525v12m0 32v10m1 -66v12m0 54v9m1 -87v12m0 75v9m0 447v2m1 -557v12m0 96v10m1 -132v14m0 118v5m1 -153v16m1 -32v16m0 154v2m1 -188v16m1 -32v16m0 610v2m1 -644v16m0 206v2m1 -231v7m2 226v2m3 2v2m4 3v2m3 2v2m3 2v2m4 3v2m0 371v2m1 -4v2m1 -4v2m1 -367v2m0 361v2m1 -4v2m1 -4v2m1 -357v2m3 2v2m2 337v9m1 -11v2m2 -5v2m2 -5v2m1 -21v19m1 -21v2m1 -4v2m2 -5v2m1 -4v2m1 -14v12m1 -14v2m1 -4v2m1 -4v2m1 -4v2m1 -4v2m1 -4v2m1 -4v2m1 -4v2m1 -4v2m1 -4v2m1 -4v2m1 -4v2m1 -4v2m1 -4v2m1 -4v2m1 -4v2m1 -4v2m1 -4v2m1 -4v2m1 -4v2m1 -5v3m1 -5v2m1 -4v2m1 -4v2m2 -5v2m4 -7v2m4 -7v2m2 -5v2m1 -5v3m1 -5v2m1 -5v3m1 -6v3m1 -5v2m1 -5v3m1 -170v2m0 162v3m1 -6v3m1 -5v2m1 -157v2m0 150v3m1 -6v3m1 -149v2m0 142v2m1 -4v2m1 -141v2m1 134v2m1 -4v2m1 -132v2m1 125v2m1 -126v2m1 119v2m1 -4v2m1 -117v2m1 110v2m1 -111v2m0 105v2m1 -6v4m1 -104v2m0 95v3m1 -7v4m1 -7v3m1 -89v2m0 80v4m1 -84v3m0 50v27m1 -77v5m0 41v4m1 -45v5m0 32v4m1 -36v4m0 23v5m1 -28v5m0 14v4m1 -18v5m0 5v4m1 -9v5" stroke="#0f0"/><path transform="translate(0,.5)" d="M0 0m86 275h1m1 3h1m0 1h1m1 3h1m0 1h1m1 3h1m0 1h1m1 3h1m0 1h1m0 1h1m1 3h1m0 1h1m1 3h1m0 1h1m1 3h1m0 1h1m0 1h1m1 3h1m0 1h1m1 3h1m0 1h1m1 3h1m0 1h1m1 3h1m0 1h1m0 1h2m0 1h1m0 1h1m0 1h2m0 1h1m0 1h1m0 1h2m0 1h1m0 1h2m0 1h1m0 1h1m0 1h2m0 1h1m0 1h2m0 1h1m0 1h1m0 1h2m0 1h1m0 1h1m0 1h2m0 1h1m0 1h2m0 1h1m0 1h1m0 1h2m0 1h1m0 1h2m0 1h1m0 1h1m0 1h2m0 1h1m0 1h1m0 1h2m0 1h1m0 1h2m0 1h1m0 1h1m0 1h2m0 1h1m1 3h1m0 1h1m1 3h1m1 3h1m1 3h1m0 1h1m1 3h1m1 3h1m0 1h1m1 3h1m1 3h1m1 3h1m0 1h1m-7 105h1m-4 5h1m-3 3h1m-4 5h1m-16 37h1m-3 3h1m-2 1h1m-2 1h1m-3 3h1m-2 1h1m-2 1h1m-3 3h1m-29 66h1m-6 26h1m-3 3h1m-5 12h2m-4 1h2m-3 1h1m-8 13h1m-2 1h1m-2 1h1m-2 1h1m-2 1h1m-2 1h1m-2 1h1m-3 1h2m-3 1h1m-2 1h1m-2 1h1m-2 1h1m-2 1h1m-2 1h1m-2 1h1m-2 1h1m-2 1h1m-2 1h1m-2 1h1m-3 3h1m-2 1h1m-2 1h1m-2 1h1m-2 1h1m-3 3h1m-2 1h1m-3 3h1m-3 1h2m-4 1h2m-3 1h1m-3 1h2m-4 1h2m-4 1h2m-1 13h2m0 1h2m0 1h2" stroke="#0f0"/>
<path transform="translate(.5,0)" d="M0 0m260 529v2m1 0v2m1 0v2m1 0v2m1 0v3m1 0v2m1 0v2m1 0v2m11 -35v2m1 -6v4m1 -8v4m1 -8v4m1 -8v4m1 -6v2m6 66v2m2 1v2m2 1v2m1 0v2m2 1v2m7 -153v5m1 -11v6m0 5v4m1 -21v6m0 15v4m1 -31v6m0 25v5m1 -42v6m0 36v4m0 24v6m1 -79v3m0 46v4m0 8v12m1 -75v2m0 53v8m1 -65v2m1 -4v2m1 -4v2m2 -5v2m1 -4v2m1 -4v2m1 -4v2m1 209v2m1 -216v2m1 -4v2m1 -4v2m0 220v2m2 -227v2m1 -4v2m0 229v2m1 -235v2m0 233v2m1 -239v2m0 237v4m1 0v4m1 0v3m1 -254v2m0 252v2m3 2v2m2 -266v2m0 265v2m2 1v2m2 -277v2m1 277v2m2 1v2m2 -290v2m0 289v2m1 0v2m2 1v2m1 0v2m1 -306v2m4 -7v2m5 -8v2m3 -6v2m2 -5v2m2 -5v2m2 -5v2m1 338v2m1 -345v2m2 -5v2m0 348v2m2 -355v2m2 -5v2m1 -4v2m2 -5v2m2 -5v2m2 -5v2m2 -5v2m2 -5v2m2 -5v2m2 -5v2m1 -12v10m1 -29v19m1 -37v18m1 -28v10m10 440v2m1 0v3m1 0v4m1 0v3m1 0v2m3 -482v2m0 482v2m6 5v2m4 3v2m1 0v2m1 0v2m1 0v2m1 0v5m1 0v5m1 0v2m1 0v2m0 11v2m1 -13v2m1 0v8m16 -564v2m27 -30v2m18 -21v2m18 -21v2m19 -22v2m18 -21v2" stroke="#0ff"/><path transform="translate(0,.5)" d="M0 0m553 51h1m-2 1h1m-2 1h1m-2 1h1m-2 1h1m-2 1h1m-2 1h1m-2 1h1m-3 3h1m-2 1h1m-2 1h1m-2 1h1m-2 1h1m-2 1h1m-2 1h1m-2 1h1m-2 1h1m-2 1h1m-2 1h1m-2 1h1m-2 1h1m-2 1h1m-2 1h1m-2 1h1m-2 1h1m-3 3h1m-2 1h1m-2 1h1m-2 1h1m-2 1h1m-2 1h1m-2 1h1m-2 1h1m-2 1h1m-2 1h1m-2 1h1m-2 1h1m-2 1h1m-2 1h1m-2 1h1m-2 1h1m-2 1h1m-2 1h1m-3 3h1m-2 1h1m-2 1h1m-2 1h1m-2 1h1m-2 1h1m-2 1h1m-2 1h1m-2 1h1m-2 1h1m-2 1h1m-2 1h1m-2 1h1m-2 1h1m-2 1h1m-2 1h1m-2 1h1m-3 3h1m-2 1h1m-2 1h1m-2 1h1m-2 1h1m-2 1h1m-2 1h1m-2 1h1m-2 1h1m-2 1h1m-2 1h1m-2 1h1m-2 1h1m-2 1h1m-2 1h1m-2 1h1m-2 1h1m-3 3h1m-2 1h1m-2 1h1m-2 1h1m-2 1h1m-2 1h1m-2 1h1m-2 1h1m-2 1h1m-2 1h1m-2 1h1m-2 1h1m-2 1h1m-2 1h1m-2 1h1m-2 1h1m-2 1h1m-2 1h1m-2 1h1m-2 1h1m-2 1h1m-2 1h1m-2 1h1m-2 1h1m-2 1h1m-2 1h1m-3 3h1m-2 1h1m-2 1h1m-2 1h1m-2 1h1m-2 1h1m-2 1h1m-2 1h1m-2 1h1m-2 1h1m-2 1h1m-2 1h1m-2 1h1m-2 1h1m-2 1h1m-2 1h1m-2 1h1m-2 1h1m-2 1h1m-2 1h1m-2 1h1m-2 1h1m-2 1h1m-2 1h1m-2 1h1m-2 1h1m-2 1h1m-2 1h1m-2 1h1m-2 1h1m-2 1h1m-2 1h1m-2 1h1m-2 1h1m-3 3h1m-2 1h1m-2 1h1m-2 1h1m-2 1h1m-2 1h1m-2 1h1m-2 1h1m-2 1h1m-2 1h1m-2 1h1m-2 1h1m-2 1h1m-2 1h1m-2 1h1m-2 1h1m-7 60h1m-3 3h1m-3 3h1m-3 3h1m-3 3h1m-3 3h1m-3 3h1m-4 5h1m-3 3h1m-3 3h1m-3 3h1m-3 3h1m-3 3h1m-3 3h1m-3 3h1m-2 1h1m-3 3h1m-2 1h1m-2 1h1m-2 1h1m-3 3h1m-2 1h1m-2 1h1m-3 3h1m-2 1h1m-2 1h1m-2 1h1m-3 3h1m-2 1h1m-2 1h1m-2 1h1m-3 3h1m-2 1h1m-2 1h1m-3 3h1m-2 1h1m-2 1h1m-2 1h1m-3 3h1m-2 1h1m-6 9h1m-5 7h1m-6 9h1m-8 88h1m-2 1h1m-2 1h1m-3 1h2m-3 1h1m-2 1h1m-2 1h1m-2 1h1m-2 1h1m-2 1h1m-3 1h2m-3 1h1m-2 1h1m-2 1h1m-2 1h1m-2 1h1m-2 1h1m-3 1h2m-3 1h1m-2 1h1m-8 21h1m-2 1h1m-2 1h1m-2 1h1m-2 1h1m-2 1h1m-2 1h1m-2 1h1m-3 1h2m-3 1h1m-2 1h1m-2 1h1m-2 1h1m-2 1h1m-2 1h1m-2 1h1m6 18h2m0 1h1m0 1h1m0 1h2m0 1h1m0 1h2m0 1h1m0 1h1m0 1h2m0 1h1m0 1h2m0 1h1m0 1h1m0 1h2m0 1h1m1 3h1m1 3h1m2 5h1m1 3h1m0 1h2m0 1h1m0 1h2m0 1h2m0 1h1m0 1h2m0 1h1m0 1h2m0 1h2m0 1h1m0 1h2m0 1h1m0 1h1m1 3h1m0 1h1m1 3h1m0 1h1m6 18h1m0 1h1m1 3h1m1 3h1m1 3h1m0 1h1m1 3h1m1 3h1m2 5h1m2 5h2m0 1h2m0 1h2m0 1h2m0 1h2m0 1h2m0 1h2m0 1h2m0 1h2m0 1h1m1 3h1m0 1h1m1 3h1m0 1h1m0 1h2m0 1h2m0 1h2m0 1h1m0 1h2m0 1h2m0 1h2m0 1h3m0 1h6m0 1h6m0 1h2m5 14h1m0 1h1m1 3h1m0 1h1m0 1h1m0 1h1m0 1h1m1 3h1m0 1h1m0 1h1m8 33h1m-3 3h1m-2 1h1m-2 1h1m-2 1h1" stroke="#0ff"/>
<path transform="translate(.5,0)" d="M0 0m355 467v8m1 -20v12m0 8v5m1 -35v10m0 25v6m1 -50v9m0 41v5m1 -63v8m0 55v5m1 -74v6m0 68v5m1 -82v3m0 79v4m1 -89v3m0 86v5m1 -97v3m0 94v4m1 -104v3m0 101v2m1 -108v2m0 106v2m1 -113v3m0 110v2m1 -118v3m0 115v2m1 -123v3m0 120v2m1 -128v3m0 125v2m1 -132v2m0 130v2m1 0v3m1 -140v2m0 138v4m1 0v4m1 0v4m1 -156v2m0 154v5m1 0v5m1 0v5m1 -175v2m0 173v4m1 0v4m1 0v3m1 -190v2m0 188v4m1 0v2m1 0v2m1 0v2m1 -205v2m0 203v2m1 0v2m1 0v2m1 -215v2m0 213v3m1 0v2m1 0v2m1 -226v2m0 224v3m1 0v2m1 0v3m1 -238v2m0 236v4m1 0v4m1 0v3m1 0v2m1 0v2m1 0v2m1 0v2m1 0v3m1 0v2m1 0v3m1 0v2m1 0v4m1 0v5m1 0v3m2 1v2m3 2v2m1 0v2m1 0v3m1 0v3m1 0v2m11 7v2m1 0v4m1 0v4m1 0v4m1 0v3m3 2v2m6 5v2m17 14v2m3 2v2m2 1v2m1 0v2m1 0v2m2 1v2m1 0v2m1 0v2m93 -527v2m35 -38v2m25 -28v2m15 -18v2m15 -18v2" stroke="#f00"/><path transform="translate(0,.5)" d="M0 0m660 97h1m-2 1h1m-2 1h1m-2 1h1m-2 1h1m-2 1h1m-2 1h1m-2 1h1m-2 1h1m-3 3h1m-2 1h1m-2 1h1m-2 1h1m-2 1h1m-2 1h1m-2 1h1m-2 1h1m-2 1h1m-2 1h1m-2 1h1m-2 1h1m-2 1h1m-2 1h1m-3 3h1m-2 1h1m-2 1h1m-2 1h1m-2 1h1m-2 1h1m-2 1h1m-2 1h1m-2 1h1m-2 1h1m-2 1h1m-2 1h1m-2 1h1m-2 1h1m-3 3h1m-2 1h1m-2 1h1m-2 1h1m-2 1h1m-2 1h1m-2 1h1m-2 1h1m-2 1h1m-2 1h1m-2 1h1m-2 1h1m-2 1h1m-2 1h1m-2 1h1m-2 1h1m-2 1h1m-2 1h1m-2 1h1m-2 1h1m-2 1h1m-2 1h1m-2 1h1m-2 1h1m-3 3h1m-2 1h1m-2 1h1m-2 1h1m-2 1h1m-2 1h1m-2 1h1m-2 1h1m-2 1h1m-2 1h1m-2 1h1m-2 1h1m-2 1h1m-2 1h1m-2 1h1m-2 1h1m-2 1h1m-2 1h1m-2 1h1m-2 1h1m-2 1h1m-2 1h1m-2 1h1m-2 1h1m-2 1h1m-2 1h1m-2 1h1m-2 1h1m-2 1h1m-2 1h1m-2 1h1m-2 1h1m-2 1h1m-2 1h1m-3 3h1m-2 1h1m-2 1h1m-2 1h1m-2 1h1m-2 1h1m-2 1h1m-2 1h1m-2 1h1m-2 1h1m-2 1h1m-2 1h1m-2 1h1m-2 1h1m-2 1h1m-2 1h1m-2 1h1m-2 1h1m-2 1h1m-2 1h1m-2 1h1m-2 1h1m-2 1h1m-2 1h1m-2 1h1m-2 1h1m-2 1h1m-2 1h1m-2 1h1m-2 1h1m-2 1h1m-2 1h1m-2 1h1m-2 1h1m-2 1h1m-2 1h1m-2 1h1m-2 1h1m-2 1h1m-2 1h1m-2 1h1m-2 1h1m-2 1h1m-2 1h1m-2 1h1m-2 1h1m-2 1h1m-2 1h1m-2 1h1m-2 1h1m-2 1h1m-2 1h1m-2 1h1m-2 1h1m-2 1h1m-2 1h1m-2 1h1m-2 1h1m-2 1h1m-2 1h1m-2 1h1m-2 1h1m-2 1h1m-2 1h1m-2 1h1m-2 1h1m-2 1h1m-2 1h1m-2 1h1m-2 1h1m-2 1h1m-2 1h1m-2 1h1m-2 1h1m-2 1h1m-2 1h1m-2 1h1m-2 1h1m-3 1h2m-3 1h1m-2 1h1m-2 1h1m-2 1h1m-2 1h1m-2 1h1m-2 1h1m-2 1h1m-2 1h1m-2 1h1m-2 1h1m-3 1h2m-3 1h1m-2 1h1m-2 1h1m-2 1h1m-2 1h1m-2 1h1m-2 1h1m-2 1h1m-2 1h1m-2 1h1m-3 1h2m-3 1h1m-2 1h1m-2 1h1m-2 1h1m-2 1h1m-2 1h1m-2 1h1m-2 1h1m-2 1h1m-2 1h1m-2 1h1m-3 1h2m-3 1h1m-2 1h1m-2 1h1m-2 1h1m-2 1h1m-2 1h1m-2 1h1m-2 1h1m-2 1h1m-2 1h1m-2 1h1m-2 1h1m-2 1h1m-2 1h1m-2 1h1m-3 1h2m-3 1h1m-2 1h1m-2 1h1m-2 1h1m-2 1h1m-2 1h1m-2 1h1m-2 1h1m-2 1h1m-2 1h1m-2 1h1m-2 1h1m-2 1h1m-2 1h1m-2 1h1m-2 1h1m-2 1h1m-2 1h1m-3 1h2m-3 1h1m-2 1h1m-2 1h1m-2 1h1m-2 1h1m-2 1h1m-2 1h1m-2 1h1m-2 1h1m-2 1h1m-2 1h1m-3 3h1m-2 1h1m-3 3h1m-2 1h1m-3 3h1m-2 1h1m-3 3h1m-2 1h1m-2 1h1m-3 3h1m-2 1h1m-3 3h1m-2 1h1m-3 3h1m-2 1h1m-3 3h1m36 248h1m1 3h1m0 1h1m5 13h2m0 1h1m0 1h1m0 1h2m0 1h1m0 1h1m0 1h2m5 18h1m0 1h1m1 3h1m0 1h1m0 1h1m0 1h1m0 1h1m1 3h1m0 1h1m0 1h1m0 1h1m0 1h1m0 1h2m0 1h1m0 1h1m0 1h1m0 1h1m0 1h2m0 1h1m0 1h1m0 1h1m1 3h1m0 1h1m1 3h1m3 7h1m3 7h1m0 1h1m0 1h1m0 1h1m0 1h1m0 1h1m0 1h1m0 1h1" stroke="#f00"/>
<path transform="translate(.5,0)" d="M0 0m356 467v8m1 -20v12m0 8v5m1 -31v6m0 25v6m1 0v5m1 0v5m1 0v5m1 0v4m1 0v5m1 0v4m1 0v2m1 0v2m1 0v2m1 0v2m1 0v2m1 0v2m1 0v2m1 0v3m1 0v4m1 0v4m1 0v4m1 0v5m1 0v5m1 0v5m1 0v4m1 0v4m1 0v3m1 0v4m1 0v2m1 0v2m1 0v2m1 0v2m1 0v2m1 0v2m1 0v3m1 0v2m1 0v2m1 0v3m1 0v2m1 0v3m1 0v4m1 0v4m1 0v3m1 0v2m1 0v2m1 0v2m1 0v2m1 0v3m1 0v2m1 0v3m1 0v2m1 0v4m1 0v5m1 0v3m1 0v1m1 0v2m1 0v1m1 0v1m1 0v2m1 0v2m1 0v3m1 0v3m1 0v2m1 0v1m1 -1v1m1 0v1m1 0v1m1 0v1m1 -1v1m1 0v1m1 0v1m1 0v1m1 -1v1m1 0v2m1 0v2" stroke="#f00"/>
<path d="M62 648.5h4M62 657.5h4M62 668.5h4" stroke="#fff"/>
<rect x="227" y="652" width="7" height="7" fill="#c8c800"/>
<text x="230.5" y="658.2" font-size="7" font-weight="bold" text-anchor="middle" fill="#000" shape-rendering="auto">3</text>
<rect x="223" y="681" width="7" height="7" fill="#c8c800"/>
<text x="226.5" y="687.2" font-size="7" font-weight="bold" text-anchor="middle" fill="#000" shape-rendering="auto">2</text>
<rect x="216" y="707" width="7" height="7" fill="#c8c800"/>
<text x="219.5" y="713.2" font-size="7" font-weight="bold" text-anchor="middle" fill="#000" shape-rendering="auto">1</text>
<rect x="67.5" y="607.5" width="43" height="17" fill="#000" stroke="#ff0"/>
<text x="71.5" y="620.5" fill="#ff0" textLength="36">CAPE</text>
<rect x="67.5" y="636.5" width="57" height="17" fill="#000" stroke="#e07000"/>
<text x="71.5" y="649.5" fill="#e07000" textLength="50">CINH * 5</text>
<rect x="625.5" y="697.5" width="30" height="17" fill="#000" stroke="#f0f"/>
<text x="629.5" y="710.5" fill="#f0f" textLength="23">LCL</text>
<g font-weight="bold" font-size="16" fill="#fff"><text x="62" y="29" textLength="114.3">Station: Zürich</text><text x="202.5" y="29" textLength="127.8">Date: 12.05.2008</text><text x="351.5" y="29" textLength="92.8">Time: 0950Z</text></g>
<text x="53" y="54.6" fill="#fff" text-anchor="end" textLength="21">100</text>
<text x="53" y="325.6" fill="#fff" text-anchor="end" textLength="21">200</text>
<text x="53" y="453.6" fill="#fff" text-anchor="end" textLength="21">300</text>
<text x="53" y="533.6" fill="#fff" text-anchor="end" textLength="21">400</text>
<text x="53" y="590.6" fill="#fff" text-anchor="end" textLength="21">500</text>
<text x="53" y="634.6" fill="#fff" text-anchor="end" textLength="21">600</text>
<text x="53" y="669.6" fill="#fff" text-anchor="end" textLength="21">700</text>
<text x="53" y="698.6" fill="#fff" text-anchor="end" textLength="21">800</text>
<text x="53" y="723.6" fill="#fff" text-anchor="end" textLength="21">900</text>
<text x="53" y="744.6" fill="#fff" text-anchor="end" textLength="28">1000</text>
<text x="670" y="50" fill="#fff" textLength="46">16167m</text>
<text x="670" y="321" fill="#fff" textLength="46">11781m</text>
<text x="670" y="449" fill="#fff" textLength="39">9196m</text>
<text x="670" y="529" fill="#fff" textLength="39">7249m</text>
<text x="670" y="586" fill="#fff" textLength="39">5644m</text>
<text x="670" y="630" fill="#fff" textLength="39">4272m</text>
<text x="670" y="665" fill="#fff" textLength="39">3070m</text>
<text x="670" y="694" fill="#fff" textLength="39">2027m</text>
<text x="670" y="719" fill="#fff" textLength="39">1042m</text>
<path d="M61.5 750v5M121.5 750v5M181.5 750v5M241.5 750v5M301.5 750v5M361.5 750v5M421.5 750v5M481.5 750v5M541.5 750v5M601.5 750v5M661.5 750v5" stroke="#fff"/>
<text x="50" y="767.9" fill="#fff" textLength="18">-50</text>
<text x="110" y="767.9" fill="#fff" textLength="18">-40</text>
<text x="170" y="767.9" fill="#fff" textLength="18">-30</text>
<text x="230" y="767.9" fill="#fff" textLength="18">-20</text>
<text x="290" y="767.9" fill="#fff" textLength="18">-10</text>
<text x="358" y="767.9" fill="#fff">0</text>
<text x="414.5" y="767.9" fill="#fff" textLength="14">10</text>
<text x="474.5" y="767.9" fill="#fff" textLength="14">20</text>
<text x="534.5" y="767.9" fill="#fff" textLength="14">30</text>
<text x="594.5" y="767.9" fill="#fff" textLength="14">40</text>
<text x="654.5" y="767.9" fill="#fff" textLength="14">50</text>
<text x="276" y="781" fill="#fff" textLength="171">Temperature, Dewpoint  [ °C ]</text>
<path d="M61.5 788v5M121.5 788v5M181.5 788v5M241.5 788v5M301.5 788v5M361.5 788v5M421.5 788v5M481.5 788v5M541.5 788v5M601.5 788v5M661.5 788v5" stroke="#fff"/>
<text x="58" y="805.5" fill="#fff">0</text>
<text x="114.5" y="805.5" fill="#fff" textLength="14">10</text>
<text x="174.5" y="805.5" fill="#fff" textLength="14">20</text>
<text x="234.5" y="805.5" fill="#fff" textLength="14">30</text>
<text x="294.5" y="805.5" fill="#fff" textLength="14">40</text>
<text x="354.5" y="805.5" fill="#fff" textLength="14">50</text>
<text x="414.5" y="805.5" fill="#fff" textLength="14">60</text>
<text x="474.5" y="805.5" fill="#fff" textLength="14">70</text>
<text x="534.5" y="805.5" fill="#fff" textLength="14">80</text>
<text x="594.5" y="805.5" fill="#fff" textLength="14">90</text>
<text x="651" y="805.5" fill="#fff" textLength="21">100</text>
<text x="308.5" y="818.7" fill="#fff" textLength="106">Windspeed  [ knt ]</text>
<path d="M61.5 826v5M121.5 826v5M181.5 826v5M241.5 826v5M301.5 826v5M361.5 826v5M421.5 826v5M481.5 826v5M541.5 826v5M601.5 826v5M661.5 826v5" stroke="#fff"/>
<text x="58" y="842.6" fill="#fff">0</text>
<text x="111" y="842.6" fill="#fff" textLength="21">300</text>
<text x="171" y="842.6" fill="#fff" textLength="21">600</text>
<text x="231" y="842.6" fill="#fff" textLength="21">900</text>
<text x="287.5" y="842.6" fill="#fff" textLength="28">1200</text>
<text x="347.5" y="842.6" fill="#fff" textLength="28">1500</text>
<text x="407.5" y="842.6" fill="#fff" textLength="28">1800</text>
<text x="467.5" y="842.6" fill="#fff" textLength="28">2100</text>
<text x="527.5" y="842.6" fill="#fff" textLength="28">2400</text>
<text x="587.5" y="842.6" fill="#fff" textLength="28">2700</text>
<text x="647.5" y="842.6" fill="#fff" textLength="28">3000</text>
<text x="291" y="856.5" fill="#fff" textLength="141">CAPE, CINH * 5  [ J/kg ]</text>
<path d="M61.5 863v5M136.5 863v5M211.5 863v5M286.5 863v5M361.5 863v5M436.5 863v5M511.5 863v5M586.5 863v5M661.5 863v5" stroke="#fff"/>
<text x="46.5" y="879.4" fill="#fff" textLength="25">-100</text>
<text x="125" y="879.4" fill="#fff" textLength="18">-50</text>
<text x="208" y="879.4" fill="#fff">0</text>
<text x="279.5" y="879.4" fill="#fff" textLength="14">50</text>
<text x="351" y="879.4" fill="#fff" textLength="21">100</text>
<text x="426" y="879.4" fill="#fff" textLength="21">150</text>
<text x="501" y="879.4" fill="#fff" textLength="21">200</text>
<text x="576" y="879.4" fill="#fff" textLength="21">250</text>
<text x="651" y="879.4" fill="#fff" textLength="21">300</text>
<text x="260.5" y="893" fill="#fff" textLength="202">Storm Relative Helicity  [ m^2/s^2 ]</text>
<text x="747" y="32" font-weight="bold" font-size="14" fill="#0f0" textLength="27.5" lengthAdjust="spacingAndGlyphs">OBS</text>
<text x="818" y="32" font-weight="bold" font-size="14" fill="#ff1493" textLength="17" lengthAdjust="spacingAndGlyphs">SR</text>
<path d="M761.5 40V770" stroke="#0f0"/>
<path d="M826.5 40V770" stroke="#ff1493"/>
<path transform="translate(.5,0)" d="M0 0m749 120v2m1 0v2m1 0v2m1 0v2m1 0v2m1 0v2m1 0v3m1 0v2m1 0v2m1 0v2m1 0v2m1 0v2m1 0v2m0 70v2m0 512v3m1 -519v2m0 515v3m1 -522v2m0 518v3m1 -525v2m0 521v4m1 -530v3m0 524v2m1 -531v2m0 528v2m1 -534v2m1 -4v2m1 -5v3m1 -5v2m1 -4v2m0 545v4m1 -553v2m0 517v2m1 -523v2m0 519v2m4 -4v2m0 39v2m1 -43v2m1 -3v3m1 -3v3m4 -1v2m1 -2v2m25 -589v2m0 587v4m1 -19v2m1 11v2m1 -585v2m0 62v2m0 507v2m1 -509v2m1 0v2m0 488v2m1 -556v2m0 64v2m0 478v2m0 8v2m0 15v2m0 13v4m1 -524v2m0 478v3m0 7v2m1 -490v2m0 42v2m0 435v2m0 7v3m0 13v2m1 -574v2m0 66v2m0 42v4m0 433v3m0 7v2m1 -491v2m0 44v3m0 433v3m0 6v3m0 11v2m1 -505v2m0 45v4m0 432v2m0 7v2m0 19v2m1 -583v2m0 68v2m0 47v3m0 431v3m0 6v2m1 -492v2m0 48v4m0 430v3m0 5v3m0 8v2m0 11v4m1 -518v2m0 50v3m0 430v2m0 6v2m1 -565v2m0 70v2m0 51v4m0 428v3m0 5v2m0 7v2m1 -447v2m0 390v31m0 8v2m0 5v2m1 -34v2m1 -4v2m1 -4v2m1 -4v2m1 -14v3m0 7v2m1 -4v2m1 -4v2m1 -4v2m1 -4v2m1 -8v2m0 2v2m1 -7v2m0 1v2m1 -6v4m1 -5v3m1 -5v4m1 -5v2" stroke="#fff"/><path transform="translate(0,.5)" d="M0 0m809 123h1m1 3h1m0 1h1m1 3h1m0 1h1m1 3h1m0 1h1m1 3h1m0 1h1m1 3h1m0 1h1m1 3h1m-1 72h1m-66 56h15m0 1h16m56 27h1m-2 1h1m-2 1h1m-3 1h2m-3 1h1m-2 1h1m-2 1h1m-2 1h1m-2 1h1m-3 1h2m-3 1h1m-2 1h1m-2 1h1m-2 1h1m-2 1h1m-2 1h1m-3 1h2m-3 1h1m-2 1h1m-67 1h2m63 0h1m-64 1h4m0 1h4m0 1h3m0 1h4m0 1h3m0 1h4m0 1h4m0 1h2m-30 31h2m63 0h15m-78 1h3m75 0h15m-90 1h2m0 1h3m0 1h3m0 1h3m0 1h3m0 1h2m0 1h3m0 1h3m0 1h2m-29 24h2m63 0h8m-71 1h3m68 0h15m-83 1h2m81 0h8m-89 1h3m0 1h3m0 1h3m0 1h3m0 1h2m0 1h3m0 1h3m0 1h2m-29 19h2m63 0h15m-78 1h3m75 0h16m-91 1h4m0 1h3m0 1h3m0 1h3m0 1h3m0 1h4m0 1h3m0 1h2m-30 17h2m63 0h8m-71 1h3m68 0h15m-83 1h2m81 0h8m-89 1h3m0 1h3m0 1h3m0 1h3m0 1h2m0 1h3m0 1h3m0 1h2m-29 13h2m63 0h5m-68 1h3m65 0h10m-75 1h2m73 0h10m-83 1h3m80 0h5m-85 1h3m0 1h2m0 1h3m0 1h3m0 1h2m0 1h3m0 1h2m-28 11h2m63 0h5m-68 1h2m66 0h10m-76 1h3m73 0h10m-83 1h2m81 0h5m-86 1h3m0 1h2m0 1h2m0 1h3m0 1h2m0 1h3m0 1h2m0 1h2m-28 8h2m63 0h4m-67 1h2m65 0h7m-72 1h2m70 0h8m-78 1h2m76 0h7m-83 1h3m80 0h4m-84 1h2m0 1h2m0 1h2m0 1h3m0 1h2m0 1h2m0 1h2m0 1h2m-28 5h2m63 0h8m-71 1h2m69 0h14m-83 1h3m80 0h8m-88 1h2m0 1h3m0 1h2m0 1h2m0 1h3m0 1h2m0 1h3m0 1h2m0 1h2m-28 5h2m63 0h15m-78 1h2m76 0h15m-91 1h3m0 1h2m0 1h3m0 1h2m0 1h2m0 1h3m0 1h2m0 1h3m0 1h2m0 1h2m-28 4h2m63 0h15m-78 1h2m76 0h15m-91 1h2m0 1h2m0 1h3m0 1h2m0 1h2m0 1h2m0 1h3m0 1h2m0 1h2m0 1h2m0 1h2m-28 2h2m63 0h15m-78 1h2m76 0h15m-91 1h2m0 1h2m0 1h2m0 1h2m0 1h2m0 1h2m0 1h2m0 1h2m0 1h2m0 1h2m-24 1h2m22 0h2m39 0h15m-78 1h2m22 0h2m52 0h15m-91 1h2m0 1h2m0 1h2m0 1h2m0 1h2m0 1h2m0 1h2m0 1h2m0 1h2m0 1h2m63 0h8m-71 1h2m47 0h14m-87 1h2m24 0h2m37 0h8m-71 1h2m0 1h2m0 1h2m0 1h2m0 1h2m79 0h3m-82 1h3m71 0h5m-76 1h2m65 0h4m-69 1h2m58 0h5m-63 1h2m51 0h5m-56 1h2m45 0h4m-72 1h1m22 0h2m40 0h3m-67 1h2m22 0h2m-24 1h2m0 1h2m0 1h2m0 1h2m81 0h3m-84 1h2m73 0h6m-79 1h2m65 0h6m-71 1h2m57 0h6m-63 1h2m49 0h6m-74 1h1m18 0h2m44 0h3m-67 1h2m18 0h2m-20 1h2m18 0h2m67 0h2m-89 1h2m18 0h2m61 0h4m-85 1h2m76 0h3m-79 1h2m70 0h4m-74 1h2m65 0h3m-68 1h2m59 0h4m-63 1h2m54 0h3m-57 1h2m48 0h4m-71 1h1m18 0h2m44 0h2m-66 1h2m18 0h2m69 0h2m-91 1h2m18 0h2m64 0h3m-87 1h2m18 0h2m59 0h3m-82 1h2m74 0h3m-77 1h2m68 0h4m-72 1h2m63 0h3m-66 1h2m58 0h3m15 0h2m-78 1h2m53 0h3m16 0h2m-74 1h2m48 0h3m16 0h3m-89 1h1m18 0h2m44 0h2m17 0h2m-85 1h2m18 0h2m58 0h3m-81 1h2m18 0h2m54 0h2m8 0h1m-85 1h2m18 0h2m50 0h2m8 0h2m-82 1h2m65 0h3m8 0h2m-78 1h2m61 0h2m10 0h1m-74 1h2m56 0h3m10 0h2m-71 1h2m52 0h2m12 0h1m2 0h1m-85 1h2m13 0h2m48 0h2m12 0h2m2 0h1m4 0h1m-87 1h2m13 0h2m58 0h2m3 0h1m3 0h2m-84 1h2m13 0h2m55 0h1m4 0h1m3 0h1m-80 1h2m13 0h2m51 0h2m8 0h1m-77 1h2m13 0h2m48 0h1m8 0h2m-74 1h2m13 0h2m44 0h2m8 0h1m-70 1h3m54 0h2m9 0h1m-66 1h2m51 0h1m-52 1h2m47 0h2m-68 1h2m17 0h2m44 0h1m-64 1h2m17 0h2m51 0h1m-71 1h2m17 0h2m48 0h1m-68 1h2m17 0h2m45 0h1m-65 1h2m61 0h1m-62 1h2m57 0h1m-58 1h3m53 0h1m-54 1h2m49 0h2m1 0h1m-70 1h2m15 0h2m49 0h1m-67 1h3m14 0h2m46 0h1m-63 1h2m14 0h2m43 0h1m-67 1h2m5 0h3m13 0h2m-23 1h3m5 0h3m12 0h2m-22 1h2m6 0h2m-8 1h3m5 0h3m-8 1h3m5 0h3m-8 1h2m6 0h2m-8 1h3m5 0h3m-8 1h3m5 0h2m-7 1h2m0 1h3m0 1h2m-28 3h2m0 1h2m0 1h3m0 1h2m0 1h3m0 1h2m0 1h2m0 1h3m0 1h2m0 1h3m0 1h2m0 1h2m-28 3h2m0 1h3m0 1h3m41 0h1m-42 1h3m0 1h3m0 1h4m33 0h1m-34 1h3m0 1h3m0 1h3m26 0h1m-27 1h2m25 0h1m-55 1h2m23 0h1m-24 1h4m17 0h2m21 0h1m-41 1h3m12 0h2m24 0h1m8 0h1m-48 1h4m7 0h1m27 0h1m-36 1h3m33 0h1m-25 1h6m15 0h1m3 0h1m7 0h1m-44 1h1m4 0h3m24 0h1m-43 1h6m2 0h2m10 0h2m19 0h1m1 0h1m-49 1h5m22 0h2m18 0h1m4 0h1m7 0h1m-51 1h1m37 0h1m4 0h1m7 0h1m-54 1h2m40 0h1m3 0h1m-49 1h2m43 0h1m3 0h1m-51 1h1m44 0h1m1 0h1m3 0h1m6 0h1m-61 1h2m46 0h1m1 0h1m3 0h1m-57 1h2m49 0h1m1 0h1m3 0h1m-59 1h1m52 0h1m5 0h1m5 0h1m-12 1h1m1 1h1m0 1h1m3 0h1m-6 1h1m1 0h1m3 0h1m-6 1h1m1 0h1m3 0h1m-6 1h1m1 0h1m3 0h1m-65 1h1m58 0h1m1 0h1m3 0h1m-65 1h1m58 0h1m-59 1h1m58 0h1m-59 1h1m59 0h1m-60 1h1m59 0h1m-60 1h2m56 0h1m1 0h1m-59 1h1m56 0h1m-57 1h1m56 0h1m-57 1h1m-4 1h1m3 0h1m-4 1h1m3 0h1m-8 1h1m1 0h1m1 0h1m3 0h1m-8 1h1m1 0h1m1 0h1m3 0h1m-8 1h1m1 0h1m1 0h1m3 0h1m-8 1h1m1 0h1m1 0h1m3 0h1m-8 1h1m3 0h1m3 0h1m-8 1h1m3 0h1m3 0h2m-8 1h1m2 0h1m4 0h1m-8 1h1m2 0h1m4 0h1m-10 1h1m1 0h1m2 0h2m3 0h1m-10 1h1m1 0h1m3 0h1m3 0h1m-10 1h1m1 0h1m3 0h1m3 0h1m-10 1h1m1 0h1m3 0h1m-6 1h1m1 0h1m3 0h1m-4 1h1m3 0h1m-4 1h1m-3 1h1m2 0h1m-3 1h1m0 1h1" stroke="#fff"/>
<rect x="729" y="827" width="15" height="8" fill="#f00"/>
<text x="753" y="836.2" fill="#f00" textLength="112">Temperature Profile</text>
<rect x="729" y="847" width="15" height="8" fill="#0ff"/>
<text x="753" y="856.2" fill="#0ff" textLength="93">Dewpoint Profile</text>
<rect x="729" y="867" width="15" height="8" fill="#0f0"/>
<text x="753" y="876.2" fill="#0f0" textLength="137">OBS Windspeed Profile</text>
<rect x="729" y="887" width="15" height="8" fill="#ff1493"/>
<text x="753" y="896.2" fill="#ff1493" textLength="127">SR Windspeed Profile</text>
<rect x="729" y="907" width="15" height="8" fill="#c8c800"/>
<text x="753" y="916.2" fill="#c8c800" textLength="221">Sfc-3km Storm Relative Helicity Profile</text>
<rect x="729" y="927" width="15" height="8" fill="#404000"/>
<text x="753" y="936.2" fill="#404000" textLength="203">Effective Layer (CAPE &gt;= 100 J/kg)</text>
<rect x="1078" y="827" width="16" height="8" fill="#0f0"/>
<text x="1103" y="836.2" fill="#0f0" textLength="184">No / Non Severe Thunderstorms</text>
<rect x="1078" y="847" width="16" height="8" fill="#ff0"/>
<text x="1103" y="856.2" fill="#ff0" textLength="212">Scattered / Moderate Thunderstorms</text>
<rect x="1078" y="867" width="16" height="8" fill="#f00"/>
<text x="1103" y="876.2" fill="#f00" textLength="210">Widespread / Severe Thunderstorms</text>
<text x="894" y="40" fill="#fff" textLength="60">Parameter</text>
<text x="1124" y="40" fill="#fff" text-anchor="end" textLength="60">Value LCL</text>
<text x="1214" y="40" fill="#fff" text-anchor="end" textLength="62">Value CCL</text>
<text x="1230" y="40" fill="#fff" textLength="23">Unit</text>
<text x="894" y="62" fill="#fff" textLength="141">Convective Temperature:</text>
<text x="1124" y="62" fill="#ff0" text-anchor="end" textLength="32">21.53</text>
<text x="1230" y="62" fill="#fff" textLength="22">[°C]</text>
<text x="894" y="79" fill="#fff" textLength="93">Snowfall Height:</text>
<text x="1124" y="79" fill="#fff" text-anchor="end" textLength="46">2282.37</text>
<text x="1230" y="79" fill="#fff" textLength="19">[m]</text>
<text x="894" y="104" fill="#fff" textLength="258">Parcels: Using 50mB mean layer LCL + CCL</text>
<text x="894" y="124" fill="#fff" textLength="68">Lifted Index:</text>
<text x="1124" y="124" fill="#f00" text-anchor="end" textLength="29">-3.10</text>
<text x="1214" y="124" fill="#f00" text-anchor="end" textLength="29">-4.92</text>
<text x="1230" y="124" fill="#fff" textLength="22">[°C]</text>
<text x="894" y="141" fill="#fff" textLength="40">CAPE:</text>
<text x="1124" y="141" fill="#f00" text-anchor="end" textLength="39">619.10</text>
<text x="1214" y="141" fill="#f00" text-anchor="end" textLength="46">1159.06</text>
<text x="1230" y="141" fill="#fff" textLength="31">[J/kg]</text>
<text x="894" y="158" fill="#fff" textLength="34">CINH:</text>
<text x="1124" y="158" fill="#f00" text-anchor="end" textLength="32">73.35</text>
<text x="1230" y="158" fill="#fff" textLength="31">[J/kg]</text>
<text x="894" y="175" fill="#fff" textLength="68">CAPE Virt.:</text>
<text x="1124" y="175" fill="#f00" text-anchor="end" textLength="39">672.31</text>
<text x="1214" y="175" fill="#f00" text-anchor="end" textLength="46">1154.39</text>
<text x="1230" y="175" fill="#fff" textLength="31">[J/kg]</text>
<text x="894" y="192" fill="#fff" textLength="62">CINH Virt.:</text>
<text x="1124" y="192" fill="#f00" text-anchor="end" textLength="32">63.44</text>
<text x="1230" y="192" fill="#fff" textLength="31">[J/kg]</text>
<text x="894" y="209" fill="#fff" textLength="142">DCAPE (LFS = 625mB):</text>
<text x="1124" y="209" fill="#ff0" text-anchor="end" textLength="39">340.18</text>
<text x="1230" y="209" fill="#fff" textLength="31">[J/kg]</text>
<text x="894" y="226" fill="#fff" textLength="120">850-600 Lapse Rate:</text>
<text x="1124" y="226" fill="#f00" text-anchor="end" textLength="32">21.45</text>
<text x="1230" y="226" fill="#fff" textLength="22">[°C]</text>
<text x="894" y="243" fill="#fff" textLength="145">Fawbush-Miller Hail Size:</text>
<text x="1124" y="243" fill="#ff0" text-anchor="end" textLength="48">0.6 - 1.3</text>
<text x="1230" y="243" fill="#fff" textLength="26">[cm]</text>
<text x="894" y="260" fill="#fff" textLength="141">Sig. Hail Param. (SHIP):</text>
<text x="1124" y="260" fill="#0f0" text-anchor="end" textLength="25">0.28</text>
<text x="1230" y="260" fill="#fff" textLength="15">[1]</text>
<text x="894" y="277" fill="#fff" textLength="183">Max. Hail Size (new, new2, old):</text>
<text x="1124" y="277" fill="#f00" text-anchor="end" textLength="25">4.14</text>
<text x="1230" y="277" fill="#fff" textLength="26">[cm]</text>
<text x="1124" y="277" fill="#fff">,</text>
<text x="1136" y="277" fill="#f00" textLength="25">3.67</text>
<text x="1161" y="277" fill="#fff">,</text>
<text x="1173" y="277" fill="#ff0" textLength="25">2.18</text>
<text x="894" y="297" fill="#fff" textLength="102">LCL / CCL (AGL):</text>
<text x="1124" y="297" fill="#ff0" text-anchor="end" textLength="46">1146.56</text>
<text x="1214" y="297" fill="#ff0" text-anchor="end" textLength="46">1489.48</text>
<text x="1230" y="297" fill="#fff" textLength="19">[m]</text>
<text x="894" y="314" fill="#fff" textLength="106">Convective Height:</text>
<text x="1124" y="314" fill="#ff0" text-anchor="end" textLength="25">7.79</text>
<text x="1214" y="314" fill="#f00" text-anchor="end" textLength="25">8.05</text>
<text x="1230" y="314" fill="#fff" textLength="25">[km]</text>
<text x="894" y="339" fill="#fff" textLength="106">Convective Indices</text>
<text x="894" y="359" fill="#fff" textLength="94">Showalter Index:</text>
<text x="1124" y="359" fill="#f00" text-anchor="end" textLength="29">-2.40</text>
<text x="1230" y="359" fill="#fff" textLength="22">[°C]</text>
<text x="894" y="376" fill="#fff" textLength="149">Modified Thompson Index:</text>
<text x="1124" y="376" fill="#f00" text-anchor="end" textLength="32">40.13</text>
<text x="1230" y="376" fill="#fff" textLength="22">[°C]</text>
<text x="894" y="393" fill="#fff" textLength="104">Total Totals Index:</text>
<text x="1124" y="393" fill="#f00" text-anchor="end" textLength="32">57.70</text>
<text x="1230" y="393" fill="#fff" textLength="22">[°C]</text>
<text x="894" y="410" fill="#fff" textLength="56">KO Index:</text>
<text x="1124" y="410" fill="#f00" text-anchor="end" textLength="36">-10.64</text>
<text x="1230" y="410" fill="#fff" textLength="15">[1]</text>
<text x="894" y="427" fill="#fff" textLength="124">Craven SigSvr / 1000:</text>
<text x="1124" y="427" fill="#f00" text-anchor="end" textLength="25">4.52</text>
<text x="1230" y="427" fill="#fff" textLength="56">[m^3/s^3]</text>
<text x="894" y="444" fill="#fff" textLength="115">SCP RM (new, old):</text>
<text x="1124" y="444" fill="#0f0" text-anchor="end" textLength="25">0.06</text>
<text x="1230" y="444" fill="#fff" textLength="15">[1]</text>
<text x="1124" y="444" fill="#fff">,</text>
<text x="1136" y="444" fill="#0f0" textLength="25">0.01</text>
<text x="894" y="461" fill="#fff" textLength="113">SCP LM (new, old):</text>
<text x="1124" y="461" fill="#0f0" text-anchor="end" textLength="25">0.01</text>
<text x="1230" y="461" fill="#fff" textLength="15">[1]</text>
<text x="1124" y="461" fill="#fff">,</text>
<text x="1136" y="461" fill="#0f0" textLength="25">0.01</text>
<text x="894" y="478" fill="#fff" textLength="89">STP (new, old):</text>
<text x="1124" y="478" fill="#0f0" text-anchor="end" textLength="25">0.01</text>
<text x="1230" y="478" fill="#fff" textLength="15">[1]</text>
<text x="1124" y="478" fill="#fff">,</text>
<text x="1136" y="478" fill="#0f0" textLength="25">0.01</text>
<text x="894" y="495" fill="#fff" textLength="74">SB STP (fix):</text>
<text x="1124" y="495" fill="#0f0" text-anchor="end" textLength="25">0.00</text>
<text x="1230" y="495" fill="#fff" textLength="15">[1]</text>
<text x="894" y="512" fill="#fff" textLength="132">Derecho Comp Param:</text>
<text x="1124" y="512" fill="#0f0" text-anchor="end" textLength="25">0.04</text>
<text x="1230" y="512" fill="#fff" textLength="15">[1]</text>
<text x="894" y="529" fill="#fff" textLength="153">MCS 18m/s (MMP, MSP):</text>
<text x="1124" y="529" fill="#0f0" text-anchor="end" textLength="32">23.98</text>
<text x="1230" y="529" fill="#fff" textLength="20">[%]</text>
<text x="1124" y="529" fill="#fff">,</text>
<text x="1136" y="529" fill="#fff" textLength="12">---</text>
<text x="894" y="546" fill="#fff" textLength="142">Exp. Supercell Index CH:</text>
<text x="1124" y="546" fill="#ff0" text-anchor="end" textLength="25">1.38</text>
<text x="1230" y="546" fill="#fff" textLength="15">[1]</text>
<text x="894" y="563" fill="#fff" textLength="98">SWISS 12 Index:</text>
<text x="1124" y="563" fill="#f00" text-anchor="end" textLength="29">-2.67</text>
<text x="1230" y="563" fill="#fff" textLength="15">[1]</text>
<text x="894" y="588" fill="#fff" textLength="101">Wind Parameters</text>
<text x="894" y="608" fill="#fff" textLength="94">Storm Direction:</text>
<text x="1124" y="608" fill="#fff" text-anchor="end" textLength="39">137.59</text>
<text x="1230" y="608" fill="#fff" textLength="13">[°]</text>
<text x="894" y="625" fill="#fff" textLength="82">Storm Motion:</text>
<text x="1124" y="625" fill="#0f0" text-anchor="end" textLength="25">8.35</text>
<text x="1230" y="625" fill="#fff" textLength="25">[knt]</text>
<text x="894" y="645" fill="#fff" textLength="107">SR Wind Sfc-2km:</text>
<text x="1124" y="645" fill="#0f0" text-anchor="end" textLength="25">5.85</text>
<text x="1230" y="645" fill="#fff" textLength="25">[knt]</text>
<text x="894" y="662" fill="#fff" textLength="112">SR Wind 4km-6km:</text>
<text x="1124" y="662" fill="#0f0" text-anchor="end" textLength="25">6.43</text>
<text x="1230" y="662" fill="#fff" textLength="25">[knt]</text>
<text x="894" y="679" fill="#fff" textLength="119">SR Wind 9km-11km:</text>
<text x="1124" y="679" fill="#f00" text-anchor="end" textLength="32">14.99</text>
<text x="1230" y="679" fill="#fff" textLength="47">[knt] HP</text>
<text x="894" y="699" fill="#fff" textLength="122">Effective Shear 6000:</text>
<text x="1124" y="699" fill="#0f0" text-anchor="end" textLength="32">14.19</text>
<text x="1230" y="699" fill="#fff" textLength="25">[knt]</text>
<text x="894" y="719" fill="#fff" textLength="147">Bulk Richardson Number:</text>
<text x="1124" y="719" fill="#ff0" text-anchor="end" textLength="32">92.40</text>
<text x="1214" y="719" fill="#ff0" text-anchor="end" textLength="39">173.00</text>
<text x="1230" y="719" fill="#fff" textLength="15">[1]</text>
<text x="894" y="739" fill="#fff" textLength="111">3km Effective SRH:</text>
<text x="1124" y="739" fill="#0f0" text-anchor="end" textLength="32">12.56</text>
<text x="1230" y="739" fill="#fff" textLength="56">[m^2/s^2]</text>
<text x="894" y="756" fill="#fff" textLength="145">Max 3km SRH (Sfc-2km):</text>
<text x="1124" y="756" fill="#0f0" text-anchor="end" textLength="32">14.10</text>
<text x="1230" y="756" fill="#fff" textLength="56">[m^2/s^2]</text>
<text x="894" y="773" fill="#fff" textLength="149">Max 3km SRH Level AGL:</text>
<text x="1124" y="773" fill="#0f0" text-anchor="end" textLength="39">587.00</text>
<text x="1230" y="773" fill="#fff" textLength="19">[m]</text>
<text x="894" y="793" fill="#fff" textLength="151">3km Energy Helicity Index:</text>
<text x="1124" y="793" fill="#0f0" text-anchor="end" textLength="25">0.05</text>
<text x="1214" y="793" fill="#0f0" text-anchor="end" textLength="25">0.09</text>
<text x="1230" y="793" fill="#fff" textLength="15">[1]</text>
<text x="894" y="810" fill="#fff" textLength="139">3km Vorticity Gen. Pot.:</text>
<text x="1124" y="810" fill="#0f0" text-anchor="end" textLength="25">0.04</text>
<text x="1214" y="810" fill="#0f0" text-anchor="end" textLength="25">0.05</text>
<text x="1230" y="810" fill="#fff" textLength="43">[m/s^2]</text>
<path d="M894 41.5h60M1064 41.5h60M1152 41.5h62M1230 41.5h23M894 105.5h258M894 340.5h106M894 589.5h101" stroke="#fff"/>
</svg>
</body></html>
